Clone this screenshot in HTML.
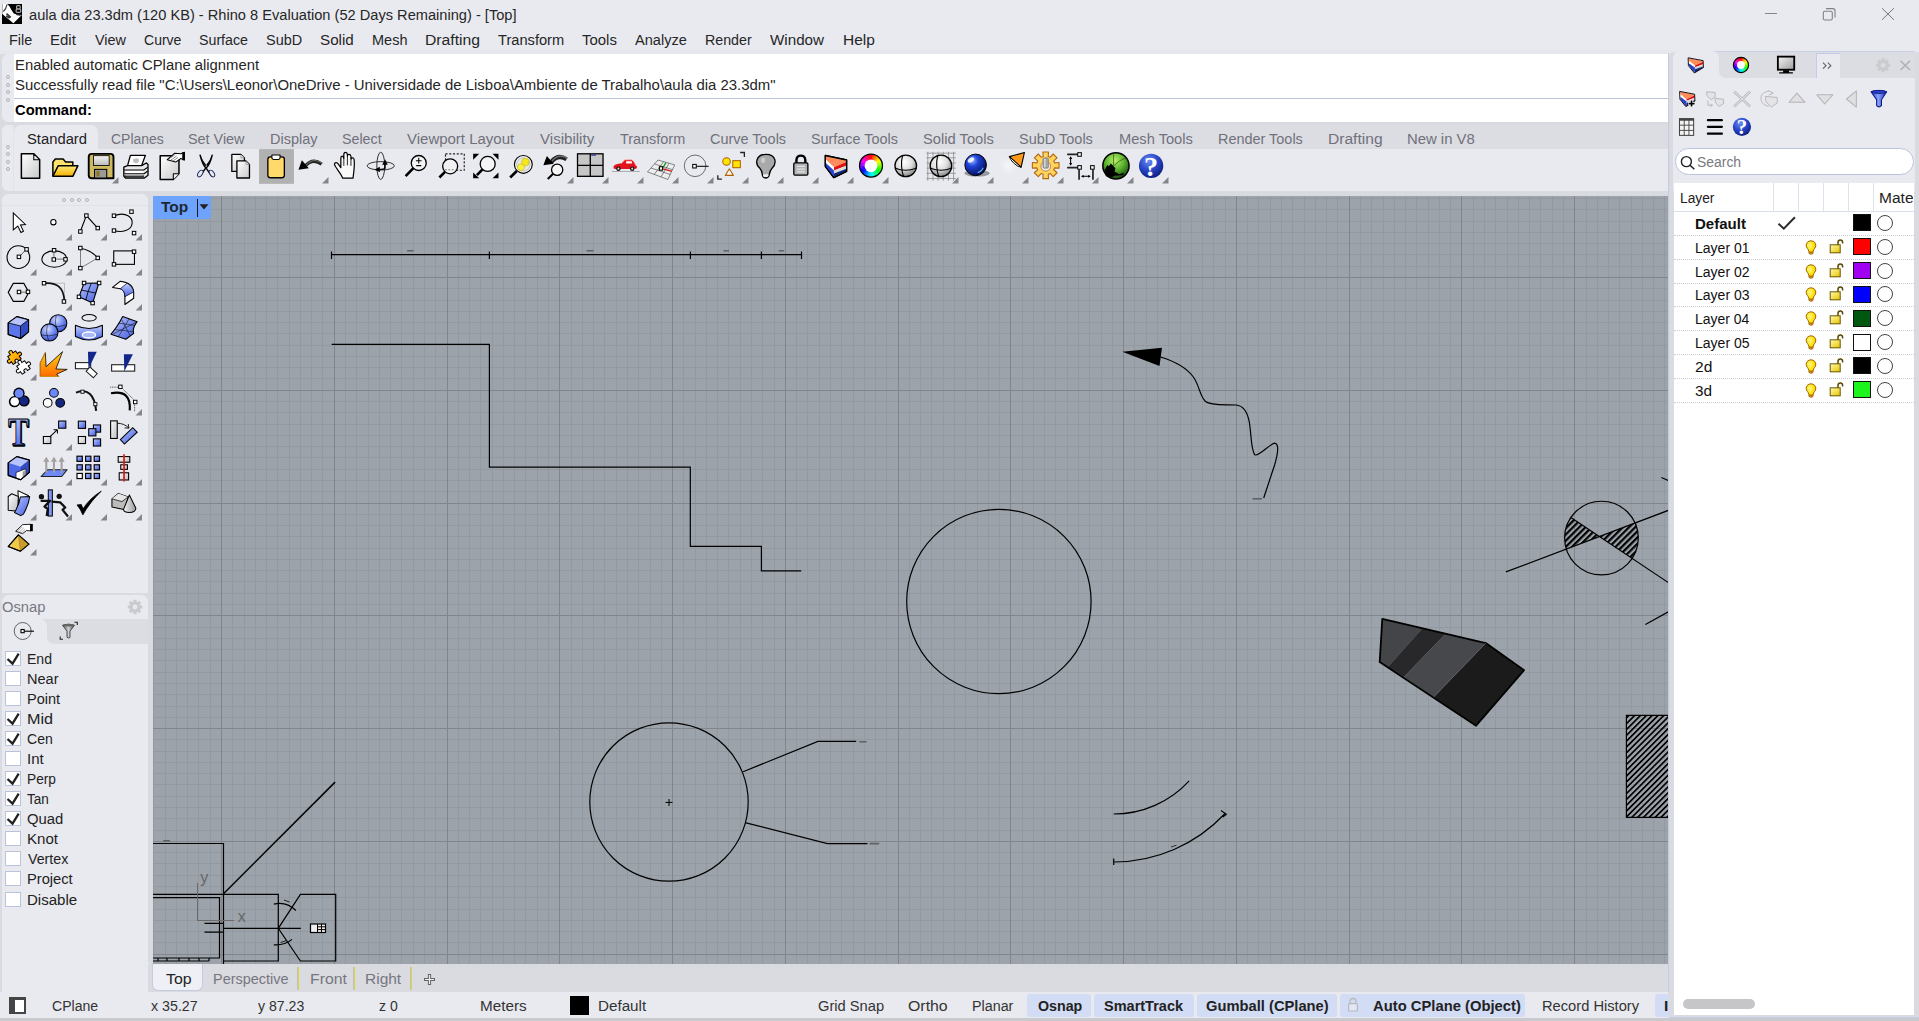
<!DOCTYPE html><html><head><meta charset="utf-8"><title>Rhino</title><style>html,body{margin:0;padding:0}
body{width:1919px;height:1021px;overflow:hidden;background:#e9eaf0;position:relative;font-family:"Liberation Sans",sans-serif}
.b{position:absolute;display:block}
.t{position:absolute;white-space:pre;display:block;transform-origin:0 0}
</style></head><body>
<div class="b" style="left:0px;top:50px;width:1672px;height:4px;background:#e6e7ed;"></div>
<div class="b" style="left:0px;top:54px;width:1672px;height:942px;background:#dadbe1;"></div>
<div class="b" style="left:2px;top:54px;width:1666px;height:68px;background:#e9eaf0;border-radius:6px 0 0 6px;"></div>
<div class="b" style="left:14px;top:54px;width:1654px;height:44px;background:#fff;"></div>
<div class="b" style="left:14px;top:98px;width:1654px;height:1px;background:#b9c3de;"></div>
<div class="b" style="left:14px;top:99px;width:1654px;height:23px;background:#fff;"></div>
<div class="b" style="left:5.5px;top:75px;width:2px;height:2px;border:1px solid #b0b1b7;border-radius:50%"></div>
<div class="b" style="left:5.5px;top:82.5px;width:2px;height:2px;border:1px solid #b0b1b7;border-radius:50%"></div>
<div class="b" style="left:5.5px;top:90px;width:2px;height:2px;border:1px solid #b0b1b7;border-radius:50%"></div>
<div class="b" style="left:5.5px;top:97.5px;width:2px;height:2px;border:1px solid #b0b1b7;border-radius:50%"></div>
<div class="b" style="left:2px;top:125px;width:1666px;height:66px;background:#e9eaf0;border-radius:6px 0 0 6px;"></div>
<div class="b" style="left:14px;top:125px;width:1654px;height:24px;background:#dcdde3;"></div>
<div class="b" style="left:13px;top:125px;width:1px;height:66px;background:#e2e3e9;"></div>
<div class="b" style="left:14px;top:125px;width:84px;height:25px;background:#e9eaf0;border-radius:7px 7px 0 0;"></div>
<div class="b" style="left:5.5px;top:144.7px;width:2px;height:2px;border:1px solid #b0b1b7;border-radius:50%"></div>
<div class="b" style="left:5.5px;top:152.2px;width:2px;height:2px;border:1px solid #b0b1b7;border-radius:50%"></div>
<div class="b" style="left:5.5px;top:159.7px;width:2px;height:2px;border:1px solid #b0b1b7;border-radius:50%"></div>
<div class="b" style="left:5.5px;top:167.2px;width:2px;height:2px;border:1px solid #b0b1b7;border-radius:50%"></div>
<div class="b" style="left:2px;top:194px;width:146px;height:399px;background:#e9eaf0;border-radius:6px 6px 0 0;"></div>
<div class="b" style="left:2px;top:205px;width:146px;height:1px;background:#e1e2e8;"></div>
<div class="b" style="left:62px;top:197.6px;width:2px;height:2px;border:1px solid #b0b1b7;border-radius:50%"></div>
<div class="b" style="left:69.5px;top:197.6px;width:2px;height:2px;border:1px solid #b0b1b7;border-radius:50%"></div>
<div class="b" style="left:77px;top:197.6px;width:2px;height:2px;border:1px solid #b0b1b7;border-radius:50%"></div>
<div class="b" style="left:84.5px;top:197.6px;width:2px;height:2px;border:1px solid #b0b1b7;border-radius:50%"></div>
<div class="b" style="left:2px;top:595px;width:146px;height:368px;background:#e9eaf0;border-radius:7px 7px 0 0;"></div>
<div class="b" style="left:2px;top:619px;width:146px;height:25px;background:#dcdde3;border-radius:0 0 0 0;"></div>
<div class="b" style="left:2px;top:619px;width:45px;height:25px;background:#e9eaf0;border-radius:0 7px 0 0;"></div>
<div class="b" style="left:47px;top:637px;width:7px;height:7px;background:#e9eaf0;"></div>
<div class="b" style="left:47px;top:630px;width:14px;height:14px;background:#dcdde3;border-radius:0 0 0 7px;"></div>
<div class="b" style="left:2px;top:963px;width:148px;height:33px;background:#e9eaf0;"></div>
<svg class="b" style="left:153px;top:196px" width="1515" height="768" viewBox="153 196 1515 768">
<rect x="153" y="196" width="1515" height="768" fill="#9da3aa"/>
<path d="M153.5 196V964M165.5 196V964M176.5 196V964M187.5 196V964M198.5 196V964M210.5 196V964M232.5 196V964M244.5 196V964M255.5 196V964M266.5 196V964M277.5 196V964M289.5 196V964M300.5 196V964M311.5 196V964M322.5 196V964M345.5 196V964M356.5 196V964M368.5 196V964M379.5 196V964M390.5 196V964M401.5 196V964M413.5 196V964M424.5 196V964M435.5 196V964M458.5 196V964M469.5 196V964M480.5 196V964M492.5 196V964M503.5 196V964M514.5 196V964M525.5 196V964M537.5 196V964M548.5 196V964M571.5 196V964M582.5 196V964M593.5 196V964M604.5 196V964M616.5 196V964M627.5 196V964M638.5 196V964M650.5 196V964M661.5 196V964M683.5 196V964M695.5 196V964M706.5 196V964M717.5 196V964M728.5 196V964M740.5 196V964M751.5 196V964M762.5 196V964M774.5 196V964M796.5 196V964M807.5 196V964M819.5 196V964M830.5 196V964M841.5 196V964M853.5 196V964M864.5 196V964M875.5 196V964M886.5 196V964M909.5 196V964M920.5 196V964M931.5 196V964M943.5 196V964M954.5 196V964M965.5 196V964M977.5 196V964M988.5 196V964M999.5 196V964M1022.5 196V964M1033.5 196V964M1044.5 196V964M1055.5 196V964M1067.5 196V964M1078.5 196V964M1089.5 196V964M1101.5 196V964M1112.5 196V964M1134.5 196V964M1146.5 196V964M1157.5 196V964M1168.5 196V964M1180.5 196V964M1191.5 196V964M1202.5 196V964M1213.5 196V964M1225.5 196V964M1247.5 196V964M1258.5 196V964M1270.5 196V964M1281.5 196V964M1292.5 196V964M1304.5 196V964M1315.5 196V964M1326.5 196V964M1337.5 196V964M1360.5 196V964M1371.5 196V964M1383.5 196V964M1394.5 196V964M1405.5 196V964M1416.5 196V964M1428.5 196V964M1439.5 196V964M1450.5 196V964M1473.5 196V964M1484.5 196V964M1495.5 196V964M1507.5 196V964M1518.5 196V964M1529.5 196V964M1540.5 196V964M1552.5 196V964M1563.5 196V964M1586.5 196V964M1597.5 196V964M1608.5 196V964M1619.5 196V964M1631.5 196V964M1642.5 196V964M1653.5 196V964M1664.5 196V964M153 198.5H1668M153 209.5H1668M153 221.5H1668M153 232.5H1668M153 243.5H1668M153 254.5H1668M153 266.5H1668M153 288.5H1668M153 300.5H1668M153 311.5H1668M153 322.5H1668M153 333.5H1668M153 345.5H1668M153 356.5H1668M153 367.5H1668M153 378.5H1668M153 401.5H1668M153 412.5H1668M153 424.5H1668M153 435.5H1668M153 446.5H1668M153 457.5H1668M153 469.5H1668M153 480.5H1668M153 491.5H1668M153 514.5H1668M153 525.5H1668M153 536.5H1668M153 548.5H1668M153 559.5H1668M153 570.5H1668M153 581.5H1668M153 593.5H1668M153 604.5H1668M153 627.5H1668M153 638.5H1668M153 649.5H1668M153 660.5H1668M153 672.5H1668M153 683.5H1668M153 694.5H1668M153 706.5H1668M153 717.5H1668M153 739.5H1668M153 751.5H1668M153 762.5H1668M153 773.5H1668M153 784.5H1668M153 796.5H1668M153 807.5H1668M153 818.5H1668M153 830.5H1668M153 852.5H1668M153 863.5H1668M153 875.5H1668M153 886.5H1668M153 897.5H1668M153 909.5H1668M153 920.5H1668M153 931.5H1668M153 942.5H1668" stroke="#9299a0" stroke-width="1" fill="none" shape-rendering="crispEdges"/>
<path d="M221.5 196V964M334.5 196V964M447.5 196V964M559.5 196V964M672.5 196V964M785.5 196V964M898.5 196V964M1010.5 196V964M1123.5 196V964M1236.5 196V964M1349.5 196V964M1461.5 196V964M1574.5 196V964M153 277.5H1668M153 390.5H1668M153 503.5H1668M153 615.5H1668M153 728.5H1668M153 841.5H1668M153 954.5H1668" stroke="#81868c" stroke-width="1" fill="none" shape-rendering="crispEdges"/>
<defs>
<pattern id="h1" width="4.4" height="4.4" patternUnits="userSpaceOnUse" patternTransform="rotate(-45) translate(0 1.2)"><rect x="0" y="0" width="4.4" height="2.2" fill="#000"/></pattern>
<pattern id="h2" width="4.12" height="4.12" patternUnits="userSpaceOnUse" patternTransform="rotate(-45) translate(0 0.6)"><rect x="0" y="0" width="4.12" height="1.7" fill="#000"/></pattern>
<clipPath id="cc"><circle cx="1601.45" cy="538.1" r="36.85"/></clipPath>
</defs>
<path d="M331.5 254.7H801.5M331.5 251.5V259M489.4 251.5V259M690.4 251.5V259M761.4 251.5V259M801.5 251.5V259" stroke="#000" stroke-width="1.2" fill="none"/>
<path d="M407 250.8H413.5M586.5 250.8H593.5M723.5 250.8H729M778.8 250.8H783.8" stroke="#5f6368" stroke-width="1.6" fill="none"/>
<path d="M331.6 344.3H489.4V467.1H690.3V546.3H761.4V570.9H801.2" stroke="#000" stroke-width="1.2" fill="none"/>
<path d="M1122.3 351.8L1162 347.7L1159.5 365.9Z" fill="#000"/>
<path d="M1160.5 357C1172 360.5 1185 366 1193 376.5C1199.5 385 1199.5 396 1205.5 401.5C1211 406 1226 404.3 1236 405C1244 405.6 1247.6 413 1249.3 422C1251.3 433 1250.8 450 1254.8 454.8C1258.8 457 1269 444.5 1274.5 443.2C1279.8 443.5 1277.5 455 1274.6 465L1263.7 498" stroke="#000" stroke-width="1.2" fill="none"/>
<path d="M1252.5 498.8H1262" stroke="#5f6368" stroke-width="1.6" fill="none"/>
<circle cx="998.9" cy="601.5" r="92.2" stroke="#000" stroke-width="1.2" fill="none"/>
<circle cx="669" cy="802" r="79.2" stroke="#000" stroke-width="1.2" fill="none"/>
<path d="M665.5 802.4H672.5M669 799V806" stroke="#000" stroke-width="1" fill="none"/>
<path d="M743.1 771.7L817.9 741.4H856.2M746 822.8L827.4 843.6H867.5" stroke="#000" stroke-width="1.2" fill="none"/>
<path d="M859.2 741.8H866.6M869.5 843.6H879.2" stroke="#5f6368" stroke-width="1.6" fill="none"/>
<path d="M1113.7 814A102.4 102.4 0 0 0 1189.2 780.8" stroke="#000" stroke-width="1.2" fill="none"/>
<path d="M1113.7 862A152.6 152.6 0 0 0 1224.6 814M1113.7 858.5V865M1221 810.5L1226.3 814.2L1222.8 817" stroke="#000" stroke-width="1.2" fill="none"/>
<path d="M1171 847L1176.5 845.2" stroke="#333" stroke-width="1" fill="none"/>
<g clip-path="url(#cc)"><path d="M1599.3 536.5L1555 506.8V553.3Z" fill="url(#h1)"/><path d="M1599.3 536.5L1645 519.2V567Z" fill="url(#h1)"/></g>
<circle cx="1601.45" cy="538.1" r="36.85" stroke="#000" stroke-width="1.2" fill="none"/>
<path d="M1505.9 571.9L1668.5 510.3M1571.3 517.7L1668.5 582.7M1661.4 477.5L1668.5 480.6M1645.4 624.6L1668.5 611.7" stroke="#000" stroke-width="1.2" fill="none"/>
<polygon points="1382.3,618.9 1422.5,628.2 1387.9,666.9 1379.7,662.0" fill="#444548"/>
<polygon points="1422.5,628.2 1445.6,633.8 1403.9,676.9 1387.9,666.9" fill="#28282a"/>
<polygon points="1445.6,633.8 1485.8,643.1 1433.7,697.0 1403.9,676.9" fill="#47484b"/>
<polygon points="1485.8,643.1 1524.1,670.2 1476.1,725.7 1433.7,697.0" fill="#1b1b1c"/>
<polygon points="1382.3,618.9 1485.8,643.1 1524.1,670.2 1476.1,725.7 1379.7,662.0" stroke="#000" stroke-width="1.8" stroke-linejoin="round" fill="none"/>
<path d="M1485.8 643.1L1433.7 697.0" stroke="#66676a" stroke-width="0.8"/>
<rect x="1626.4" y="715.3" width="45" height="102" fill="url(#h2)"/>
<path d="M1670 715.3H1626.4V817.3H1670" stroke="#000" stroke-width="1.2" fill="none"/>
<path d="M223.5 893.8L335.1 782.1" stroke="#000" stroke-width="1.5" fill="none"/>
<path d="M150 843.5H223.5V965M150 894.4H278.3V961H223.5M150 897.7H219.5V958H150M150 961H209M223.5 928.3H300.8M204.5 923.4H223.5M204.5 932.2H223.5" stroke="#000" stroke-width="1.2" fill="none"/>
<path d="M158 958V961M167 958V961M179 958V961M189 958V961M199 958V961M209 958V961" stroke="#000" stroke-width="1.2" fill="none"/>
<path d="M300.4 894.4H335.7V961H300.4L278.3 928.3Z" stroke="#000" stroke-width="1.2" fill="none"/>
<path d="M273.8 904.2Q286 901 295.9 910.5M273.8 944.9Q285 945.5 292 939.4" stroke="#000" stroke-width="1.2" fill="none"/>
<path d="M284 900L289.5 902M280.5 942.5L286.5 940.5" stroke="#222" stroke-width="1" fill="none"/>
<path d="M163.3 840.8H170" stroke="#5f6368" stroke-width="1.6" fill="none"/>
<rect x="310.5" y="924" width="15" height="8.5" fill="#f0f0f0" stroke="#000" stroke-width="1.2"/><path d="M317.5 924V932.5M321.5 924V932.5M317.5 926.8H325.5M317.5 929.6H325.5" stroke="#000" stroke-width="1" fill="none"/>
<path d="M197.5 883.2V920.5H233.8" stroke="#6a6a6a" stroke-width="1" fill="none" shape-rendering="crispEdges"/>
<text x="200.3" y="882.8" font-family="Liberation Sans, sans-serif" font-size="16" fill="#666">y</text>
<text x="237.8" y="921.5" font-family="Liberation Sans, sans-serif" font-size="16" fill="#666">x</text>
<path d="M153 196H211V215.5Q211 219 207.5 219H153Z" fill="#6ea3fc"/>
<path d="M197.5 199V217" stroke="#1a1a1a" stroke-width="1" shape-rendering="crispEdges"/>
<path d="M199.5 204.3H208.5L204 209.5Z" fill="#222"/>
</svg>
<div class="b" style="left:1668px;top:53px;width:1px;height:939px;background:#c2cae4;"></div>
<div class="b" style="left:148px;top:964px;width:1520px;height:28px;background:#dadbe1;"></div>
<div class="b" style="left:151.5px;top:964px;width:51px;height:27px;background:#eff0f5;border-radius:0 0 6px 6px;border:1px solid #c5cbe0;border-top:none;box-sizing:border-box;"></div>
<div class="b" style="left:298px;top:967px;width:1px;height:23px;background:#dcd440;"></div>
<div class="b" style="left:297px;top:967px;width:1px;height:23px;background:#8a8450;opacity:.3"></div>
<div class="b" style="left:354px;top:967px;width:1px;height:23px;background:#dcd440;"></div>
<div class="b" style="left:353px;top:967px;width:1px;height:23px;background:#8a8450;opacity:.3"></div>
<div class="b" style="left:411px;top:967px;width:1px;height:23px;background:#dcd440;"></div>
<div class="b" style="left:410px;top:967px;width:1px;height:23px;background:#8a8450;opacity:.3"></div>
<div class="b" style="left:0px;top:992px;width:1668px;height:26px;background:#e9eaf0;"></div>
<div class="b" style="left:9px;top:997px;width:17px;height:17px;background:#454545;"></div>
<div class="b" style="left:15px;top:999.5px;width:9px;height:12px;background:#fff;"></div>
<div class="b" style="left:1027px;top:994px;width:64px;height:23px;background:#d3dcf5;border-radius:3px;"></div>
<div class="b" style="left:1094px;top:994px;width:100px;height:23px;background:#d3dcf5;border-radius:3px;"></div>
<div class="b" style="left:1197px;top:994px;width:140px;height:23px;background:#d3dcf5;border-radius:3px;"></div>
<div class="b" style="left:1340px;top:994px;width:185px;height:23px;background:#d3dcf5;border-radius:3px;"></div>
<div class="b" style="left:1655px;top:994px;width:17px;height:23px;background:#d3dcf5;border-radius:3px;"></div>
<div class="b" style="left:570px;top:996px;width:19px;height:19px;background:#000;"></div>
<div class="b" style="left:1669px;top:52px;width:250px;height:969px;background:#dadbe1;border-radius:5px 0 0 0;"></div>
<div class="b" style="left:1673px;top:51px;width:242px;height:140px;background:#e9eaf0;border-radius:7px 0 0 0;"></div>
<div class="b" style="left:1673px;top:51px;width:242px;height:27px;background:#dcdde3;border-radius:7px 0 0 0;border-top:1px solid #c9d0e6;box-sizing:border-box;"></div>
<div class="b" style="left:1673px;top:51px;width:46px;height:27px;background:#e9eaf0;border-radius:7px 7px 0 0;"></div>
<div class="b" style="left:1719px;top:71px;width:7px;height:7px;background:#e9eaf0;"></div>
<div class="b" style="left:1719px;top:64px;width:14px;height:14px;background:#dcdde3;border-radius:0 0 0 7px;"></div>
<div class="b" style="left:1816px;top:53px;width:24px;height:25px;background:#e9eaf0;border-top:1px solid #c3cbe6;border-left:1px solid #c3cbe6;box-sizing:border-box;"></div>
<div class="b" style="left:1674px;top:182.5px;width:240px;height:832.5px;background:#fff;"></div>
<div class="b" style="left:1675px;top:148px;width:238.5px;height:26.5px;background:#fff;border:1px solid #bac3dd;border-radius:13.5px;box-sizing:border-box;"></div>
<svg class="b" style="left:1679px;top:154px;" width="18" height="18" viewBox="0 0 18 18"><circle cx="7.4" cy="7.6" r="5" fill="none" stroke="#222" stroke-width="1.4"/><path d="M11 11.2L15.4 15.2" stroke="#222" stroke-width="1.5"/></svg>
<div class="b" style="left:1674px;top:211px;width:240px;height:1px;background:#d9deec;"></div>
<div class="b" style="left:1773px;top:182.5px;width:1px;height:28.5px;background:#dfe3ef;"></div>
<div class="b" style="left:1798px;top:182.5px;width:1px;height:28.5px;background:#dfe3ef;"></div>
<div class="b" style="left:1823px;top:182.5px;width:1px;height:28.5px;background:#dfe3ef;"></div>
<div class="b" style="left:1848px;top:182.5px;width:1px;height:28.5px;background:#dfe3ef;"></div>
<div class="b" style="left:1873px;top:182.5px;width:1px;height:28.5px;background:#dfe3ef;"></div>
<div class="b" style="left:1674px;top:235px;width:240px;height:0px;border-top:1px dotted #c9ccd8;"></div>
<div class="b" style="left:1853px;top:214px;width:18px;height:17px;background:#000;border:1px solid #111;box-sizing:border-box;"></div>
<div class="b" style="left:1876.5px;top:215.0px;width:16px;height:16px;border:1.2px solid #444;border-radius:50%;box-sizing:border-box;background:#fff"></div>
<svg class="b" style="left:1776px;top:214px;" width="22" height="18" viewBox="0 0 22 18"><path d="M2.5 9.7L7.8 14.7L18.9 3.2" stroke="#2a2a2a" stroke-width="2" fill="none"/></svg>
<div class="b" style="left:1674px;top:259px;width:240px;height:0px;border-top:1px dotted #c9ccd8;"></div>
<div class="b" style="left:1853px;top:238px;width:18px;height:17px;background:#f00;border:1px solid #111;box-sizing:border-box;"></div>
<div class="b" style="left:1876.5px;top:238.8px;width:16px;height:16px;border:1.2px solid #444;border-radius:50%;box-sizing:border-box;background:#fff"></div>
<svg class="b" style="left:1805px;top:239.6px;" width="12" height="16" viewBox="0 0 12 16"><defs><radialGradient id="gb" cx="0.4" cy="0.35" r="0.7"><stop offset="0" stop-color="#fff68a"/><stop offset="0.6" stop-color="#ffe000"/><stop offset="1" stop-color="#e0a800"/></radialGradient><linearGradient id="gl" x1="0" y1="0" x2="1" y2="1"><stop offset="0" stop-color="#fffbb0"/><stop offset="1" stop-color="#e8c400"/></linearGradient></defs><path d="M6 0.8C9.2 0.8 10.8 3.2 10.8 5.4C10.8 8 8.6 9 8.2 11.2L7.9 13.6Q6 14.8 4.1 13.6L3.8 11.2C3.4 9 1.2 8 1.2 5.4C1.2 3.2 2.8 0.8 6 0.8Z" fill="url(#gb)" stroke="#8a5a00" stroke-width="0.9"/><path d="M4.2 12.2H7.8" stroke="#c05a00" stroke-width="1.2"/></svg>
<svg class="b" style="left:1829px;top:238.4px;" width="16" height="17" viewBox="0 0 16 17"><path d="M9 7V4.2C9 1.2 13.6 1.2 13.6 4.2V5.5" fill="none" stroke="#5a4a00" stroke-width="1.5"/><rect x="1.2" y="6.8" width="10" height="8" fill="url(#gl)" stroke="#6a5600" stroke-width="1"/></svg>
<div class="b" style="left:1674px;top:283px;width:240px;height:0px;border-top:1px dotted #c9ccd8;"></div>
<div class="b" style="left:1853px;top:262px;width:18px;height:17px;background:#a100f2;border:1px solid #111;box-sizing:border-box;"></div>
<div class="b" style="left:1876.5px;top:262.6px;width:16px;height:16px;border:1.2px solid #444;border-radius:50%;box-sizing:border-box;background:#fff"></div>
<svg class="b" style="left:1805px;top:263.6px;" width="12" height="16" viewBox="0 0 12 16"><defs><radialGradient id="gb" cx="0.4" cy="0.35" r="0.7"><stop offset="0" stop-color="#fff68a"/><stop offset="0.6" stop-color="#ffe000"/><stop offset="1" stop-color="#e0a800"/></radialGradient><linearGradient id="gl" x1="0" y1="0" x2="1" y2="1"><stop offset="0" stop-color="#fffbb0"/><stop offset="1" stop-color="#e8c400"/></linearGradient></defs><path d="M6 0.8C9.2 0.8 10.8 3.2 10.8 5.4C10.8 8 8.6 9 8.2 11.2L7.9 13.6Q6 14.8 4.1 13.6L3.8 11.2C3.4 9 1.2 8 1.2 5.4C1.2 3.2 2.8 0.8 6 0.8Z" fill="url(#gb)" stroke="#8a5a00" stroke-width="0.9"/><path d="M4.2 12.2H7.8" stroke="#c05a00" stroke-width="1.2"/></svg>
<svg class="b" style="left:1829px;top:262.4px;" width="16" height="17" viewBox="0 0 16 17"><path d="M9 7V4.2C9 1.2 13.6 1.2 13.6 4.2V5.5" fill="none" stroke="#5a4a00" stroke-width="1.5"/><rect x="1.2" y="6.8" width="10" height="8" fill="url(#gl)" stroke="#6a5600" stroke-width="1"/></svg>
<div class="b" style="left:1674px;top:306px;width:240px;height:0px;border-top:1px dotted #c9ccd8;"></div>
<div class="b" style="left:1853px;top:286px;width:18px;height:17px;background:#00f;border:1px solid #111;box-sizing:border-box;"></div>
<div class="b" style="left:1876.5px;top:286.4px;width:16px;height:16px;border:1.2px solid #444;border-radius:50%;box-sizing:border-box;background:#fff"></div>
<svg class="b" style="left:1805px;top:286.6px;" width="12" height="16" viewBox="0 0 12 16"><defs><radialGradient id="gb" cx="0.4" cy="0.35" r="0.7"><stop offset="0" stop-color="#fff68a"/><stop offset="0.6" stop-color="#ffe000"/><stop offset="1" stop-color="#e0a800"/></radialGradient><linearGradient id="gl" x1="0" y1="0" x2="1" y2="1"><stop offset="0" stop-color="#fffbb0"/><stop offset="1" stop-color="#e8c400"/></linearGradient></defs><path d="M6 0.8C9.2 0.8 10.8 3.2 10.8 5.4C10.8 8 8.6 9 8.2 11.2L7.9 13.6Q6 14.8 4.1 13.6L3.8 11.2C3.4 9 1.2 8 1.2 5.4C1.2 3.2 2.8 0.8 6 0.8Z" fill="url(#gb)" stroke="#8a5a00" stroke-width="0.9"/><path d="M4.2 12.2H7.8" stroke="#c05a00" stroke-width="1.2"/></svg>
<svg class="b" style="left:1829px;top:285.4px;" width="16" height="17" viewBox="0 0 16 17"><path d="M9 7V4.2C9 1.2 13.6 1.2 13.6 4.2V5.5" fill="none" stroke="#5a4a00" stroke-width="1.5"/><rect x="1.2" y="6.8" width="10" height="8" fill="url(#gl)" stroke="#6a5600" stroke-width="1"/></svg>
<div class="b" style="left:1674px;top:330px;width:240px;height:0px;border-top:1px dotted #c9ccd8;"></div>
<div class="b" style="left:1853px;top:310px;width:18px;height:17px;background:#00570f;border:1px solid #111;box-sizing:border-box;"></div>
<div class="b" style="left:1876.5px;top:310.2px;width:16px;height:16px;border:1.2px solid #444;border-radius:50%;box-sizing:border-box;background:#fff"></div>
<svg class="b" style="left:1805px;top:310.6px;" width="12" height="16" viewBox="0 0 12 16"><defs><radialGradient id="gb" cx="0.4" cy="0.35" r="0.7"><stop offset="0" stop-color="#fff68a"/><stop offset="0.6" stop-color="#ffe000"/><stop offset="1" stop-color="#e0a800"/></radialGradient><linearGradient id="gl" x1="0" y1="0" x2="1" y2="1"><stop offset="0" stop-color="#fffbb0"/><stop offset="1" stop-color="#e8c400"/></linearGradient></defs><path d="M6 0.8C9.2 0.8 10.8 3.2 10.8 5.4C10.8 8 8.6 9 8.2 11.2L7.9 13.6Q6 14.8 4.1 13.6L3.8 11.2C3.4 9 1.2 8 1.2 5.4C1.2 3.2 2.8 0.8 6 0.8Z" fill="url(#gb)" stroke="#8a5a00" stroke-width="0.9"/><path d="M4.2 12.2H7.8" stroke="#c05a00" stroke-width="1.2"/></svg>
<svg class="b" style="left:1829px;top:309.4px;" width="16" height="17" viewBox="0 0 16 17"><path d="M9 7V4.2C9 1.2 13.6 1.2 13.6 4.2V5.5" fill="none" stroke="#5a4a00" stroke-width="1.5"/><rect x="1.2" y="6.8" width="10" height="8" fill="url(#gl)" stroke="#6a5600" stroke-width="1"/></svg>
<div class="b" style="left:1674px;top:354px;width:240px;height:0px;border-top:1px dotted #c9ccd8;"></div>
<div class="b" style="left:1853px;top:334px;width:18px;height:17px;background:#fff;border:1px solid #111;box-sizing:border-box;"></div>
<div class="b" style="left:1876.5px;top:334.0px;width:16px;height:16px;border:1.2px solid #444;border-radius:50%;box-sizing:border-box;background:#fff"></div>
<svg class="b" style="left:1805px;top:334.6px;" width="12" height="16" viewBox="0 0 12 16"><defs><radialGradient id="gb" cx="0.4" cy="0.35" r="0.7"><stop offset="0" stop-color="#fff68a"/><stop offset="0.6" stop-color="#ffe000"/><stop offset="1" stop-color="#e0a800"/></radialGradient><linearGradient id="gl" x1="0" y1="0" x2="1" y2="1"><stop offset="0" stop-color="#fffbb0"/><stop offset="1" stop-color="#e8c400"/></linearGradient></defs><path d="M6 0.8C9.2 0.8 10.8 3.2 10.8 5.4C10.8 8 8.6 9 8.2 11.2L7.9 13.6Q6 14.8 4.1 13.6L3.8 11.2C3.4 9 1.2 8 1.2 5.4C1.2 3.2 2.8 0.8 6 0.8Z" fill="url(#gb)" stroke="#8a5a00" stroke-width="0.9"/><path d="M4.2 12.2H7.8" stroke="#c05a00" stroke-width="1.2"/></svg>
<svg class="b" style="left:1829px;top:333.4px;" width="16" height="17" viewBox="0 0 16 17"><path d="M9 7V4.2C9 1.2 13.6 1.2 13.6 4.2V5.5" fill="none" stroke="#5a4a00" stroke-width="1.5"/><rect x="1.2" y="6.8" width="10" height="8" fill="url(#gl)" stroke="#6a5600" stroke-width="1"/></svg>
<div class="b" style="left:1674px;top:378px;width:240px;height:0px;border-top:1px dotted #c9ccd8;"></div>
<div class="b" style="left:1853px;top:357px;width:18px;height:17px;background:#000;border:1px solid #111;box-sizing:border-box;"></div>
<div class="b" style="left:1876.5px;top:357.8px;width:16px;height:16px;border:1.2px solid #444;border-radius:50%;box-sizing:border-box;background:#fff"></div>
<svg class="b" style="left:1805px;top:358.6px;" width="12" height="16" viewBox="0 0 12 16"><defs><radialGradient id="gb" cx="0.4" cy="0.35" r="0.7"><stop offset="0" stop-color="#fff68a"/><stop offset="0.6" stop-color="#ffe000"/><stop offset="1" stop-color="#e0a800"/></radialGradient><linearGradient id="gl" x1="0" y1="0" x2="1" y2="1"><stop offset="0" stop-color="#fffbb0"/><stop offset="1" stop-color="#e8c400"/></linearGradient></defs><path d="M6 0.8C9.2 0.8 10.8 3.2 10.8 5.4C10.8 8 8.6 9 8.2 11.2L7.9 13.6Q6 14.8 4.1 13.6L3.8 11.2C3.4 9 1.2 8 1.2 5.4C1.2 3.2 2.8 0.8 6 0.8Z" fill="url(#gb)" stroke="#8a5a00" stroke-width="0.9"/><path d="M4.2 12.2H7.8" stroke="#c05a00" stroke-width="1.2"/></svg>
<svg class="b" style="left:1829px;top:357.4px;" width="16" height="17" viewBox="0 0 16 17"><path d="M9 7V4.2C9 1.2 13.6 1.2 13.6 4.2V5.5" fill="none" stroke="#5a4a00" stroke-width="1.5"/><rect x="1.2" y="6.8" width="10" height="8" fill="url(#gl)" stroke="#6a5600" stroke-width="1"/></svg>
<div class="b" style="left:1674px;top:402px;width:240px;height:0px;border-top:1px dotted #c9ccd8;"></div>
<div class="b" style="left:1853px;top:381px;width:18px;height:17px;background:#1cf41c;border:1px solid #111;box-sizing:border-box;"></div>
<div class="b" style="left:1876.5px;top:381.6px;width:16px;height:16px;border:1.2px solid #444;border-radius:50%;box-sizing:border-box;background:#fff"></div>
<svg class="b" style="left:1805px;top:382.6px;" width="12" height="16" viewBox="0 0 12 16"><defs><radialGradient id="gb" cx="0.4" cy="0.35" r="0.7"><stop offset="0" stop-color="#fff68a"/><stop offset="0.6" stop-color="#ffe000"/><stop offset="1" stop-color="#e0a800"/></radialGradient><linearGradient id="gl" x1="0" y1="0" x2="1" y2="1"><stop offset="0" stop-color="#fffbb0"/><stop offset="1" stop-color="#e8c400"/></linearGradient></defs><path d="M6 0.8C9.2 0.8 10.8 3.2 10.8 5.4C10.8 8 8.6 9 8.2 11.2L7.9 13.6Q6 14.8 4.1 13.6L3.8 11.2C3.4 9 1.2 8 1.2 5.4C1.2 3.2 2.8 0.8 6 0.8Z" fill="url(#gb)" stroke="#8a5a00" stroke-width="0.9"/><path d="M4.2 12.2H7.8" stroke="#c05a00" stroke-width="1.2"/></svg>
<svg class="b" style="left:1829px;top:381.4px;" width="16" height="17" viewBox="0 0 16 17"><path d="M9 7V4.2C9 1.2 13.6 1.2 13.6 4.2V5.5" fill="none" stroke="#5a4a00" stroke-width="1.5"/><rect x="1.2" y="6.8" width="10" height="8" fill="url(#gl)" stroke="#6a5600" stroke-width="1"/></svg>
<div class="b" style="left:1683px;top:999px;width:72px;height:10px;background:#c6c6c8;border-radius:5px;"></div>
<div class="b" style="left:0px;top:1018px;width:1919px;height:3px;background:#c9cace;"></div>
<div class="b" style="left:1669px;top:1017px;width:250px;height:1px;background:#c5cde6;"></div>
<svg class="b" style="left:0;top:148px" width="1672" height="44" viewBox="0 148 1672 44"><defs>
<linearGradient id="gPaper" x1="0" y1="0" x2="1" y2="1"><stop offset="0" stop-color="#ffffff"/><stop offset="1" stop-color="#c9c9c9"/></linearGradient>
<linearGradient id="gFold" x1="0" y1="0" x2="0" y2="1"><stop offset="0" stop-color="#ffe877"/><stop offset="1" stop-color="#f3b200"/></linearGradient>
<linearGradient id="gMetal" x1="0" y1="0" x2="0" y2="1"><stop offset="0" stop-color="#f4f4f4"/><stop offset="1" stop-color="#b9b9b9"/></linearGradient>
<radialGradient id="gBlueBall" cx="0.35" cy="0.3" r="0.75"><stop offset="0" stop-color="#9db8ff"/><stop offset="0.35" stop-color="#1f45d8"/><stop offset="1" stop-color="#020b52"/></radialGradient>
<radialGradient id="gWhiteBall" cx="0.42" cy="0.32" r="0.75"><stop offset="0" stop-color="#ffffff"/><stop offset="0.5" stop-color="#dedede"/><stop offset="1" stop-color="#6f6f6f"/></radialGradient><radialGradient id="gGlow" cx="0.5" cy="0.5" r="0.5"><stop offset="0" stop-color="#fff" stop-opacity="0.55"/><stop offset="1" stop-color="#fff" stop-opacity="0"/></radialGradient>
<radialGradient id="gGreenBall" cx="0.45" cy="0.3" r="0.75"><stop offset="0" stop-color="#b9f06a"/><stop offset="0.5" stop-color="#58b02c"/><stop offset="1" stop-color="#0c3a08"/></radialGradient>
<radialGradient id="gHelp" cx="0.4" cy="0.3" r="0.75"><stop offset="0" stop-color="#6f8df2"/><stop offset="0.5" stop-color="#2a48c8"/><stop offset="1" stop-color="#0a1a7a"/></radialGradient>
<radialGradient id="gBulb" cx="0.4" cy="0.35" r="0.7"><stop offset="0" stop-color="#ffffff"/><stop offset="0.7" stop-color="#d5d5d5"/><stop offset="1" stop-color="#8a8a8a"/></radialGradient>
</defs><g transform="translate(12,148) scale(0.09380)">
<path d="M100 62H232L295 125V322H100Z" fill="url(#gPaper)" stroke="#000" stroke-width="16" stroke-linejoin="round"/>
<path d="M232 62V125H295Z" fill="#e8e8e8" stroke="#000" stroke-width="11" stroke-linejoin="round"/>
<path d="M436 300V150L462 118H545L572 148H648V188" fill="#ffe36a" stroke="#000" stroke-width="16" stroke-linejoin="round"/>
<path d="M436 300L492 190H702L650 300Z" fill="url(#gFold)" stroke="#000" stroke-width="16" stroke-linejoin="round"/>
<path d="M850 62H1050Q1082 62 1082 95V322H1050L1030 322H850Q818 322 818 290V95Q818 62 850 62Z" fill="#cdb95f" stroke="#000" stroke-width="20" stroke-linejoin="round"/>
<rect x="868" y="82" width="168" height="105" fill="url(#gMetal)" stroke="#000" stroke-width="9"/>
<rect x="880" y="228" width="130" height="92" fill="#9a9a9a" stroke="#000" stroke-width="11"/>
<rect x="900" y="245" width="34" height="58" fill="#8a7426"/>
<path d="M1232 188L1262 78H1422L1382 188Z" fill="#fff" stroke="#000" stroke-width="14" stroke-linejoin="round"/>
<path d="M1292 120L1325 108L1352 118V150L1322 162L1292 150Z" fill="#bdbdbd"/>
<path d="M1192 205L1232 188H1382L1432 160L1450 175V290L1412 320H1210L1192 300Z" fill="#e9e9e9" stroke="#000" stroke-width="14" stroke-linejoin="round"/>
<path d="M1195 235H1405L1448 205M1198 275H1408L1448 245M1200 300H1408" stroke="#000" stroke-width="12" fill="none"/>
<rect x="1215" y="245" width="180" height="22" fill="#fff"/><rect x="1215" y="283" width="180" height="12" fill="#a8a8a8"/>
<path d="M1580 82H1780V275L1720 335H1580Z" fill="url(#gPaper)" stroke="#000" stroke-width="16" stroke-linejoin="round"/>
<path d="M1780 275H1720V335" fill="#eee" stroke="#000" stroke-width="11" stroke-linejoin="round"/>
<path d="M1655 125L1735 55L1800 62L1838 45V128L1800 112L1745 150Z" fill="#fff" stroke="#000" stroke-width="11" stroke-linejoin="round"/>
<rect x="1815" y="45" width="28" height="85" fill="#000"/>
<path d="M1668 120L1740 70M1690 132L1755 85M1712 142L1770 100" stroke="#555" stroke-width="7"/>
</g>
<path d="M118.5 183.5H112.0L118.5 177.0Z" fill="#85868c"/>
<g transform="translate(187,148) scale(0.09380)">
<rect x="768" y="12" width="372" height="370" fill="#b1b1b1"/>
<path d="M140 78Q170 190 205 215L262 300M268 78Q240 190 200 215L138 300" stroke="#000" stroke-width="16" fill="none" stroke-linecap="round"/>
<path d="M140 78Q165 160 205 210L215 195Q175 150 140 78ZM268 78Q245 160 205 210L195 195Q235 150 268 78Z" fill="#000"/>
<ellipse cx="142" cy="272" rx="22" ry="40" transform="rotate(35 142 272)" fill="#e9eaf0" stroke="#15225e" stroke-width="10"/>
<ellipse cx="266" cy="272" rx="22" ry="40" transform="rotate(-35 266 272)" fill="#e9eaf0" stroke="#15225e" stroke-width="10"/>
<path d="M478 68H575L612 105V250H478Z" fill="url(#gPaper)" stroke="#000" stroke-width="14" stroke-linejoin="round"/>
<path d="M575 68V105H612" fill="#ddd" stroke="#777" stroke-width="6"/>
<path d="M532 138H628L666 175V320H532Z" fill="url(#gPaper)" stroke="#000" stroke-width="14" stroke-linejoin="round"/>
<path d="M628 138V175H666" fill="#ddd" stroke="#777" stroke-width="6"/>
<rect x="862" y="95" width="176" height="222" rx="26" fill="#ffd96a" stroke="#000" stroke-width="14"/>
<path d="M905 75H992V105Q992 122 975 122H922Q905 122 905 105Z" fill="#fff" stroke="#000" stroke-width="12" stroke-linejoin="round"/>
<path d="M1258 195Q1340 100 1435 172" stroke="#222" stroke-width="34" fill="none"/>
<path d="M1258 195Q1340 100 1435 172" stroke="#6b6b6b" stroke-width="11" fill="none" transform="translate(8,-8)"/>
<path d="M1188 232L1225 130L1298 215Z" fill="#000"/>
<path d="M1660 322C1640 270 1585 215 1572 175C1575 150 1600 150 1615 175L1640 210V110C1640 80 1668 80 1672 110V70C1672 40 1708 40 1710 70V85C1712 60 1745 60 1748 90V120C1750 100 1780 100 1782 125C1790 200 1775 270 1770 322Z" fill="#fafafa" stroke="#000" stroke-width="13" stroke-linejoin="round"/>
<path d="M1672 110V190M1710 85V185M1748 120V190" stroke="#000" stroke-width="9"/>
</g>
<path d="M328.5 183.5H322.0L328.5 177.0Z" fill="#85868c"/>
<g transform="translate(362,148) scale(0.09380)">
<ellipse cx="200" cy="190" rx="145" ry="45" fill="none" stroke="#111" stroke-width="9"/>
<ellipse cx="200" cy="190" rx="42" ry="145" fill="none" stroke="#111" stroke-width="9"/>
<path d="M245 120L215 178H275Z" fill="#000"/><path d="M135 228L190 200V258Z" fill="#000"/>
<path d="M245 170V215Q240 228 180 228" stroke="#000" stroke-width="16" fill="none"/>
<circle cx="605" cy="160" r="80" fill="#f4f4f6" stroke="#000" stroke-width="14"/>
<path d="M548 215L465 300" stroke="#000" stroke-width="28"/>
<path d="M605 105V165M575 135H635M578 188H632" stroke="#000" stroke-width="11"/>
<rect x="890" y="62" width="200" height="175" fill="none" stroke="#222" stroke-width="12" stroke-dasharray="22 18"/>
<circle cx="940" cy="195" r="80" fill="#f1f1f3" stroke="#000" stroke-width="14"/>
<path d="M885 232H995" stroke="#555" stroke-width="8" stroke-dasharray="20 16"/>
<path d="M885 255L825 315" stroke="#000" stroke-width="28"/>
<path d="M1185 62H1250L1185 125ZM1455 62V125L1392 62ZM1185 322V262L1250 322ZM1455 322H1392L1455 262Z" fill="#000"/>
<circle cx="1340" cy="170" r="80" fill="#f4f4f6" stroke="#000" stroke-width="14"/>
<path d="M1285 228L1225 290" stroke="#000" stroke-width="28"/>
<circle cx="1720" cy="175" r="95" fill="#f6f6f6" stroke="#000" stroke-width="12"/>
<circle cx="1720" cy="175" r="72" fill="#e6e6e6" stroke="#999" stroke-width="6"/>
<circle cx="1742" cy="150" r="40" fill="#f4e81c" stroke="#b8a800" stroke-width="5"/>
<circle cx="1695" cy="205" r="36" fill="#fbf23a" stroke="#b8a800" stroke-width="5"/>
<path d="M1650 245L1580 315" stroke="#000" stroke-width="28"/>
</g>
<g transform="translate(537,148) scale(0.09380)">
<path d="M150 150Q225 60 315 120" stroke="#222" stroke-width="44" fill="none"/>
<path d="M150 150Q225 60 315 120" stroke="#777" stroke-width="13" fill="none" transform="translate(8,-9)"/>
<path d="M68 185L105 85L178 168Z" fill="#000"/>
<circle cx="215" cy="232" r="60" fill="#f6f6f6" stroke="#000" stroke-width="14"/>
<path d="M172 275L115 330" stroke="#000" stroke-width="22"/>
<rect x="432" y="62" width="272" height="240" fill="#c6c6c6" stroke="#000" stroke-width="14"/>
<path d="M568 62V302M432 185H704" stroke="#000" stroke-width="14"/>
<rect x="578" y="70" width="50" height="12" fill="#1b2aa5"/>
<path d="M800 250H1095" stroke="#777" stroke-width="6"/>
<path d="M815 200Q820 170 905 162L935 128H1010Q1045 150 1050 185L1065 195V215L1040 225H830Q812 220 815 200Z" fill="#e3131b"/>
<path d="M905 162L935 128H1010Q1040 148 1048 180" fill="none" stroke="#ff6b6b" stroke-width="8"/>
<rect x="950" y="140" width="62" height="26" rx="4" fill="#fff"/>
<circle cx="868" cy="220" r="24" fill="#111"/><circle cx="868" cy="220" r="11" fill="#ddd"/>
<circle cx="1015" cy="220" r="24" fill="#111"/><circle cx="1015" cy="220" r="11" fill="#ddd"/>
<path d="M1178 255L1290 128L1468 180L1395 335Z" fill="#eeeeee" stroke="#333" stroke-width="6"/>
<path d="M1215 213L1420 282M1253 170L1444 231M1250 282L1350 145M1322 308L1408 163" stroke="#333" stroke-width="6"/>
<path d="M1340 212L1375 155" stroke="#0c9b12" stroke-width="14"/><path d="M1345 222L1438 250" stroke="#d01818" stroke-width="14"/>
<rect x="1305" y="200" width="34" height="36" fill="#fff" stroke="#000" stroke-width="11"/>
<circle cx="1685" cy="190" r="115" fill="none" stroke="#444" stroke-width="8"/>
<path d="M1700 195H1830" stroke="#000" stroke-width="11"/>
<rect x="1660" y="175" width="38" height="38" fill="#fff" stroke="#000" stroke-width="11"/>
</g>
<path d="M573.5 183.5H567.0L573.5 177.0Z" fill="#85868c"/>
<path d="M608.5 183.5H602.0L608.5 177.0Z" fill="#85868c"/>
<path d="M643.5 183.5H637.0L643.5 177.0Z" fill="#85868c"/>
<path d="M678.5 183.5H672.0L678.5 177.0Z" fill="#85868c"/>
<path d="M713.5 183.5H707.0L713.5 177.0Z" fill="#85868c"/>
<path d="M748.5 183.5H742.0L748.5 177.0Z" fill="#85868c"/>
<path d="M783.5 183.5H777.0L783.5 177.0Z" fill="#85868c"/>
<path d="M818.5 183.5H812.0L818.5 177.0Z" fill="#85868c"/>
<path d="M853.5 183.5H847.0L853.5 177.0Z" fill="#85868c"/>
<path d="M888.5 183.5H882.0L888.5 177.0Z" fill="#85868c"/>
<path d="M958.5 183.5H952.0L958.5 177.0Z" fill="#85868c"/>
<path d="M993.5 183.5H987.0L993.5 177.0Z" fill="#85868c"/>
<path d="M1028.5 183.5H1022.0L1028.5 177.0Z" fill="#85868c"/>
<path d="M1063.5 183.5H1057.0L1063.5 177.0Z" fill="#85868c"/>
<path d="M1098.5 183.5H1092.0L1098.5 177.0Z" fill="#85868c"/>
<path d="M1133.5 183.5H1127.0L1133.5 177.0Z" fill="#85868c"/>
<path d="M1168.5 183.5H1162.0L1168.5 177.0Z" fill="#85868c"/>
<g transform="translate(712,148) scale(0.09380)">
<path d="M300 48H345V95M62 290V332H105" stroke="#222" stroke-width="14" fill="none"/>
<circle cx="155" cy="145" r="40" fill="#ffe600" stroke="#b06000" stroke-width="11"/>
<rect x="222" y="135" width="80" height="75" fill="#ffe600" stroke="#b06000" stroke-width="11"/>
<path d="M185 222L228 292H142Z" fill="#f6f6f6" stroke="#b06000" stroke-width="11" stroke-linejoin="round"/>
<path d="M575 68C690 68 690 170 640 215C615 240 612 270 608 295Q600 320 572 320Q545 320 538 295C535 270 535 240 510 215C455 170 465 68 575 68Z" fill="#a9a9a9" stroke="#000" stroke-width="14"/>
<path d="M545 300Q572 318 600 300L600 280H545Z" fill="#efefef"/>
<ellipse cx="545" cy="130" rx="22" ry="30" fill="#d8d8d8" opacity="0.7"/>
<path d="M900 160V130C900 65 995 65 995 130V160" fill="none" stroke="#000" stroke-width="26"/>
<rect x="872" y="158" width="150" height="132" rx="12" fill="#b4b4b4" stroke="#000" stroke-width="14"/>
<path d="M905 195H990M905 225H990M905 255H990" stroke="#e4e4e4" stroke-width="14"/>
<path d="M1208 80L1435 128V250L1298 315L1208 195Z" fill="#fff" stroke="#000" stroke-width="14" stroke-linejoin="round"/>
<path d="M1212 84L1432 130V150L1300 205L1215 125Z" fill="#ff8c5a"/>
<path d="M1300 205L1432 150V190L1300 240Z" fill="#e01010"/>
<path d="M1300 240L1432 190V222L1300 272Z" fill="#dcdcdc"/>
<path d="M1300 272L1432 222V248L1298 310Z" fill="#14267e"/>
<path d="M1215 125L1300 205V240L1214 160Z" fill="#fff"/>
<path d="M1214 160L1300 240V310L1212 195Z" fill="#2a44d0"/>
<path d="M1208 80L1435 128V250L1298 315L1208 195Z" fill="none" stroke="#000" stroke-width="14" stroke-linejoin="round"/>
<path d="M1695 188L1692.6 66.0A122 122 0 0 1 1718.6 68.3Z" fill="#ff1500"/><path d="M1695 188L1713.8 67.5A122 122 0 0 1 1739.0 74.2Z" fill="#ff3f00"/><path d="M1695 188L1734.4 72.5A122 122 0 0 1 1758.1 83.6Z" fill="#ff6a00"/><path d="M1695 188L1753.9 81.1A122 122 0 0 1 1775.3 96.1Z" fill="#ff9400"/><path d="M1695 188L1771.5 93.0A122 122 0 0 1 1790.0 111.5Z" fill="#ffbf00"/><path d="M1695 188L1786.9 107.7A122 122 0 0 1 1801.9 129.1Z" fill="#ffe900"/><path d="M1695 188L1799.4 124.9A122 122 0 0 1 1810.5 148.6Z" fill="#e9ff00"/><path d="M1695 188L1808.8 144.0A122 122 0 0 1 1815.5 169.2Z" fill="#bfff00"/><path d="M1695 188L1814.7 164.4A122 122 0 0 1 1817.0 190.4Z" fill="#94ff00"/><path d="M1695 188L1817.0 185.6A122 122 0 0 1 1814.7 211.6Z" fill="#6aff00"/><path d="M1695 188L1815.5 206.8A122 122 0 0 1 1808.8 232.0Z" fill="#3fff00"/><path d="M1695 188L1810.5 227.4A122 122 0 0 1 1799.4 251.1Z" fill="#15ff00"/><path d="M1695 188L1801.9 246.9A122 122 0 0 1 1786.9 268.3Z" fill="#00ff15"/><path d="M1695 188L1790.0 264.5A122 122 0 0 1 1771.5 283.0Z" fill="#00ff3f"/><path d="M1695 188L1775.3 279.9A122 122 0 0 1 1753.9 294.9Z" fill="#00ff6a"/><path d="M1695 188L1758.1 292.4A122 122 0 0 1 1734.4 303.5Z" fill="#00ff94"/><path d="M1695 188L1739.0 301.8A122 122 0 0 1 1713.8 308.5Z" fill="#00ffbf"/><path d="M1695 188L1718.6 307.7A122 122 0 0 1 1692.6 310.0Z" fill="#00ffe9"/><path d="M1695 188L1697.4 310.0A122 122 0 0 1 1671.4 307.7Z" fill="#00e9ff"/><path d="M1695 188L1676.2 308.5A122 122 0 0 1 1651.0 301.8Z" fill="#00bfff"/><path d="M1695 188L1655.6 303.5A122 122 0 0 1 1631.9 292.4Z" fill="#0094ff"/><path d="M1695 188L1636.1 294.9A122 122 0 0 1 1614.7 279.9Z" fill="#006aff"/><path d="M1695 188L1618.5 283.0A122 122 0 0 1 1600.0 264.5Z" fill="#003fff"/><path d="M1695 188L1603.1 268.3A122 122 0 0 1 1588.1 246.9Z" fill="#0015ff"/><path d="M1695 188L1590.6 251.1A122 122 0 0 1 1579.5 227.4Z" fill="#1500ff"/><path d="M1695 188L1581.2 232.0A122 122 0 0 1 1574.5 206.8Z" fill="#3f00ff"/><path d="M1695 188L1575.3 211.6A122 122 0 0 1 1573.0 185.6Z" fill="#6a00ff"/><path d="M1695 188L1573.0 190.4A122 122 0 0 1 1575.3 164.4Z" fill="#9400ff"/><path d="M1695 188L1574.5 169.2A122 122 0 0 1 1581.2 144.0Z" fill="#bf00ff"/><path d="M1695 188L1579.5 148.6A122 122 0 0 1 1590.6 124.9Z" fill="#e900ff"/><path d="M1695 188L1588.1 129.1A122 122 0 0 1 1603.1 107.7Z" fill="#ff00e9"/><path d="M1695 188L1600.0 111.5A122 122 0 0 1 1618.5 93.0Z" fill="#ff00bf"/><path d="M1695 188L1614.7 96.1A122 122 0 0 1 1636.1 81.1Z" fill="#ff0094"/><path d="M1695 188L1631.9 83.6A122 122 0 0 1 1655.6 72.5Z" fill="#ff006a"/><path d="M1695 188L1651.0 74.2A122 122 0 0 1 1676.2 67.5Z" fill="#ff003f"/><path d="M1695 188L1671.4 68.3A122 122 0 0 1 1697.4 66.0Z" fill="#ff0015"/>
<circle cx="1695" cy="188" r="122" fill="none" stroke="#000" stroke-width="14"/>
<circle cx="1695" cy="190" r="68" fill="#fff"/>
</g>
<g transform="translate(887,148) scale(0.09380)">
<circle cx="200" cy="190" r="115" fill="url(#gWhiteBall)" stroke="#000" stroke-width="14"/>
<path d="M88 215Q200 260 312 215" stroke="#000" stroke-width="12" fill="none"/><path d="M165 80Q140 190 175 300" stroke="#000" stroke-width="12" fill="none"/>
<path d="M435 40V350M490 40V350M545 40V350M600 40V350M655 40V350M710 40V350M420 55H735M420 105H735M420 160H735M420 215H735M420 270H735M420 325H735" stroke="#8f8f8f" stroke-width="9"/>
<circle cx="575" cy="190" r="115" fill="url(#gWhiteBall)" stroke="#000" stroke-width="14"/>
<path d="M463 215Q575 260 687 215" stroke="#000" stroke-width="12" fill="none"/><path d="M540 80Q515 190 550 300" stroke="#000" stroke-width="12" fill="none"/>
<ellipse cx="960" cy="270" rx="135" ry="35" fill="#000" opacity="0.35"/>
<circle cx="945" cy="180" r="115" fill="url(#gBlueBall)" stroke="#000" stroke-width="10"/>
<ellipse cx="895" cy="128" rx="38" ry="22" transform="rotate(-35 895 128)" fill="#fff" opacity="0.85"/>
<path d="M965 262Q1010 250 1025 210" stroke="#7fd6ff" stroke-width="12" fill="none" opacity="0.8"/>
<circle cx="1290" cy="190" r="95" fill="url(#gGlow)"/>
<path d="M1305 92L1465 48L1430 205Z" fill="#ff9a18" stroke="#000" stroke-width="12" stroke-linejoin="round"/>
<path d="M1305 92L1430 205Q1390 200 1350 160Q1312 122 1305 92Z" fill="#fff3d8" stroke="#000" stroke-width="10" stroke-linejoin="round"/>
<polygon points="1786,158 1834,155 1834,215 1786,212 1778,232 1813,264 1771,306 1739,271 1719,279 1722,327 1662,327 1665,279 1645,271 1613,306 1571,264 1606,232 1598,212 1550,215 1550,155 1598,158 1606,138 1571,106 1613,64 1645,99 1665,91 1662,43 1722,43 1719,91 1739,99 1771,64 1813,106 1778,138" fill="#ffd45e" stroke="#b46a10" stroke-width="12" stroke-linejoin="round"/>
<circle cx="1692" cy="195" r="52" fill="#e9eaf0" stroke="#b46a10" stroke-width="8"/>
<rect x="1662" y="105" width="60" height="110" rx="16" fill="#a3a3a3" stroke="#6f6f6f" stroke-width="6"/><rect x="1675" y="112" width="16" height="95" rx="8" fill="#d8d8d8"/>
</g>
<g transform="translate(1062,148) scale(0.09380)">
<path d="M55 68H170M55 210H170M182 230V338M330 230V338" stroke="#222" stroke-width="18"/>
<rect x="168" y="50" width="38" height="38" fill="#fff" stroke="#000" stroke-width="11"/>
<rect x="168" y="188" width="38" height="38" fill="#fff" stroke="#000" stroke-width="11"/>
<rect x="305" y="188" width="38" height="38" fill="#fff" stroke="#000" stroke-width="11"/>
<path d="M92 95V182M210 302H300" stroke="#000" stroke-width="11"/>
<path d="M92 88L108 118H76ZM92 190L108 160H76ZM204 302L232 288V316ZM306 302L278 288V316Z" fill="#000"/>
<circle cx="575" cy="190" r="140" fill="url(#gGreenBall)" stroke="#000" stroke-width="16"/>
<path d="M550 60V190M560 190Q600 130 690 105" stroke="#33531e" stroke-width="8" fill="none"/>
<path d="M470 205L485 180L500 195L520 165L545 190L570 215L560 250L610 280L660 265L650 290L560 295L520 320L470 300L445 250Z" fill="#000"/>
<circle cx="950" cy="190" r="130" fill="url(#gHelp)"/>
<text x="950" y="298" font-family="Liberation Serif, serif" font-weight="bold" font-size="300" text-anchor="middle" fill="#fff">?</text>
</g></svg>
<svg class="b" style="left:0;top:204px" width="150" height="390" viewBox="0 204 150 390"><defs>
<linearGradient id="lb1" x1="0" y1="0" x2="1" y2="1"><stop offset="0" stop-color="#b9c6ff"/><stop offset="1" stop-color="#3f5be0"/></linearGradient>
<linearGradient id="lb2" x1="0" y1="0" x2="0" y2="1"><stop offset="0" stop-color="#c4d0ff"/><stop offset="1" stop-color="#4560e2"/></linearGradient>
<radialGradient id="lbs" cx="0.4" cy="0.3" r="0.8"><stop offset="0" stop-color="#d5ddff"/><stop offset="0.5" stop-color="#6f88f0"/><stop offset="1" stop-color="#2a43c4"/></radialGradient>
<linearGradient id="lor" x1="0" y1="0" x2="0" y2="1"><stop offset="0" stop-color="#ffd21a"/><stop offset="1" stop-color="#ff6a00"/></linearGradient>
<linearGradient id="lor2" x1="0" y1="0" x2="1" y2="1"><stop offset="0" stop-color="#ffd21a"/><stop offset="1" stop-color="#ff9500"/></linearGradient>
<linearGradient id="lgw" x1="0" y1="0" x2="1" y2="1"><stop offset="0" stop-color="#ffffff"/><stop offset="1" stop-color="#bdbdbd"/></linearGradient>
<linearGradient id="lgw2" x1="0" y1="0" x2="1" y2="0"><stop offset="0" stop-color="#f2f2f2"/><stop offset="1" stop-color="#9a9a9a"/></linearGradient>
</defs><g transform="translate(0,204) scale(0.07817)">
<path d="M170 115V330L228 282L268 365L300 348L262 268L325 262Z" fill="#fff" stroke="#000" stroke-width="13" stroke-linejoin="miter"/>
<circle cx="683" cy="233" r="34" fill="#fff" stroke="#000" stroke-width="13"/>
<path d="M1028 352L1105 148L1250 308" stroke="#000" stroke-width="14" fill="none"/>
<rect x="1083.0" y="126.0" width="44" height="44" fill="#fff" stroke="#000" stroke-width="13"/><rect x="1006.0" y="330.0" width="44" height="44" fill="#fff" stroke="#000" stroke-width="13"/><rect x="1228.0" y="286.0" width="44" height="44" fill="#fff" stroke="#000" stroke-width="13"/>
<path d="M1458 150C1620 90 1700 180 1690 250C1680 340 1560 370 1458 340" stroke="#000" stroke-width="14" fill="none"/>
<rect x="1436.0" y="128.0" width="44" height="44" fill="#fff" stroke="#000" stroke-width="13"/><rect x="1660.0" y="76.0" width="44" height="44" fill="#fff" stroke="#000" stroke-width="13"/><rect x="1436.0" y="318.0" width="44" height="44" fill="#fff" stroke="#000" stroke-width="13"/><rect x="1693.0" y="350.0" width="44" height="44" fill="#fff" stroke="#000" stroke-width="13"/>
<circle cx="235" cy="680" r="145" stroke="#000" stroke-width="14" fill="none"/>
<path d="M245 675L335 582" stroke="#000" stroke-width="8"/>
<rect x="318.0" y="558.0" width="44" height="44" fill="#fff" stroke="#000" stroke-width="13"/><rect x="220.0" y="654.0" width="44" height="44" fill="#fff" stroke="#000" stroke-width="13"/>
<ellipse cx="695" cy="705" rx="160" ry="105" stroke="#000" stroke-width="14" fill="none"/>
<path d="M690 600V705H835" stroke="#000" stroke-width="7" fill="none"/>
<rect x="670.0" y="570.0" width="44" height="44" fill="#fff" stroke="#000" stroke-width="13"/><rect x="666.0" y="688.0" width="44" height="44" fill="#fff" stroke="#000" stroke-width="13"/><rect x="816.0" y="686.0" width="44" height="44" fill="#fff" stroke="#000" stroke-width="13"/>
<path d="M1030 565Q1170 590 1250 690" stroke="#000" stroke-width="14" fill="none"/>
<path d="M1030 565V820L1250 690" stroke="#000" stroke-width="6" fill="none"/>
<rect x="1006.0" y="541.0" width="44" height="44" fill="#fff" stroke="#000" stroke-width="13"/><rect x="1228.0" y="668.0" width="44" height="44" fill="#fff" stroke="#000" stroke-width="13"/><rect x="1006.0" y="798.0" width="44" height="44" fill="#fff" stroke="#000" stroke-width="13"/>
<rect x="1455" y="600" width="265" height="172" fill="none" stroke="#000" stroke-width="14"/>
<rect x="1693.0" y="588.0" width="44" height="44" fill="#fff" stroke="#000" stroke-width="13"/><rect x="1436.0" y="750.0" width="44" height="44" fill="#fff" stroke="#000" stroke-width="13"/>
</g>
<g transform="translate(0,274) scale(0.07817)">
<path d="M105 235L170 120H305L370 235L305 350H170Z" stroke="#000" stroke-width="14" fill="none"/>
<path d="M245 232H355" stroke="#000" stroke-width="7"/>
<rect x="221.0" y="208.0" width="44" height="44" fill="#fff" stroke="#000" stroke-width="13"/><rect x="336.0" y="206.0" width="44" height="44" fill="#fff" stroke="#000" stroke-width="13"/>
<path d="M565 118H825V350" stroke="#888" stroke-width="6" fill="none"/>
<path d="M565 118Q820 95 822 350" stroke="#111" stroke-width="22" fill="none"/>
<rect x="541.0" y="96.0" width="44" height="44" fill="#fff" stroke="#000" stroke-width="13"/><rect x="796.0" y="330.0" width="44" height="44" fill="#fff" stroke="#000" stroke-width="13"/>
<path d="M1075 118L1265 115L1185 372L1010 292Z" fill="url(#lb1)" stroke="#000" stroke-width="14" stroke-linejoin="round"/>
<path d="M1168 118Q1120 230 1098 332M1040 205Q1130 225 1230 245" stroke="#000" stroke-width="11" fill="none"/>
<rect x="1053.0" y="93.0" width="44" height="44" fill="#fff" stroke="#000" stroke-width="13"/><rect x="1246.0" y="93.0" width="44" height="44" fill="#fff" stroke="#000" stroke-width="13"/><rect x="988.0" y="270.0" width="44" height="44" fill="#fff" stroke="#000" stroke-width="13"/><rect x="1163.0" y="350.0" width="44" height="44" fill="#fff" stroke="#000" stroke-width="13"/>
<path d="M1440 172L1540 92Q1700 110 1710 230V310L1598 390V290Q1600 200 1540 188Z" fill="#fff" stroke="#000" stroke-width="14" stroke-linejoin="round"/>
<path d="M1540 188L1625 118Q1700 160 1710 230L1598 290Q1595 210 1540 188Z" fill="url(#lb2)" stroke="#000" stroke-width="9"/>
<path d="M105 625L215 545L365 585V740L262 825L105 775Z" fill="#5a76ea" stroke="#000" stroke-width="14" stroke-linejoin="round"/>
<path d="M105 625L215 545L365 585L262 665Z" fill="#b7c4fb"/><path d="M262 665L365 585V740L262 825Z" fill="#334bc0"/>
<path d="M105 625L262 665L365 585M262 665V825" stroke="#000" stroke-width="10" fill="none"/>
<path d="M105 625L215 545L365 585V740L262 825L105 775Z" fill="none" stroke="#000" stroke-width="14" stroke-linejoin="round"/>
<circle cx="745" cy="630" r="110" fill="url(#lbs)" stroke="#000" stroke-width="13"/>
<path d="M640 665Q745 690 852 650M718 525Q690 630 735 738" stroke="#000" stroke-width="9" fill="none" opacity="0.75"/>
<circle cx="632" cy="748" r="110" fill="url(#lbs)" stroke="#000" stroke-width="13"/>
<path d="M525 780Q632 808 738 770M605 642Q578 748 622 856" stroke="#000" stroke-width="9" fill="none" opacity="0.75"/>
<ellipse cx="1140" cy="560" rx="92" ry="42" fill="none" stroke="#000" stroke-width="13"/>
<path d="M965 655Q1140 740 1310 655V800Q1140 890 965 800Z" fill="url(#lb2)" stroke="#000" stroke-width="14" stroke-linejoin="round"/>
<ellipse cx="1138" cy="780" rx="85" ry="38" fill="#aab8f8" stroke="#fff" stroke-width="18"/>
<path d="M1570 545L1755 610Q1690 690 1710 760L1610 835L1420 770Q1500 680 1570 545Z" fill="url(#lb1)" stroke="#000" stroke-width="14" stroke-linejoin="round"/>
<path d="M1520 630Q1620 640 1730 660M1470 710Q1580 720 1705 740M1650 575Q1580 700 1515 800M1665 790L1560 590M1450 765L1740 620" stroke="#000" stroke-width="8" fill="none" opacity="0.8"/>
</g>
<g transform="translate(0,344) scale(0.07817)">
<g transform="rotate(-35 300 300)"><path d="M238 238H281.4Q265.9 194.60000000000002 300 194.60000000000002Q334.1 194.60000000000002 318.6 238H362V281.4Q405.4 265.9 405.4 300Q405.4 334.1 362 318.6V362H318.6Q331.0 327.9 300 327.9Q269.0 327.9 281.4 362H238V318.6Q194.60000000000002 334.1 194.60000000000002 300Q194.60000000000002 265.9 238 281.4Z" fill="#fff" stroke="#000" stroke-width="13" stroke-linejoin="round"/></g>
<g transform="rotate(-35 185 175)"><path d="M123 113H166.4Q150.9 69.60000000000001 185 69.60000000000001Q219.1 69.60000000000001 203.6 113H247V156.4Q290.4 140.9 290.4 175Q290.4 209.1 247 193.6V237H203.6Q216.0 202.9 185 202.9Q154.0 202.9 166.4 237H123V193.6Q79.60000000000001 209.1 79.60000000000001 175Q79.60000000000001 140.9 123 156.4Z" fill="url(#lor2)" stroke="#000" stroke-width="13" stroke-linejoin="round"/></g>
<path d="M515 415V240L580 110L590 290L800 98L715 320L860 325L725 385L750 415Z" fill="url(#lor)" stroke="#000" stroke-width="10" stroke-linejoin="miter"/>
<path d="M515 415V240L580 110" stroke="#ff9a1a" stroke-width="10" fill="none"/><path d="M515 415H750" stroke="#ffb31a" stroke-width="10"/>
<rect x="965" y="238" width="195" height="78" fill="#fff" stroke="#222" stroke-width="14"/>
<rect x="1150" y="295" width="125" height="72" transform="rotate(42 1150 295)" fill="#fff" stroke="#222" stroke-width="13"/>
<path d="M1125 100H1238L1132 318Z" fill="#13268a"/>
<rect x="1428" y="265" width="295" height="82" fill="#fff" stroke="#222" stroke-width="14"/>
<path d="M1585 130H1700L1590 352Z" fill="#13268a"/>
<circle cx="243" cy="630" r="72" fill="#000"/><circle cx="185" cy="738" r="72" fill="#000"/><circle cx="308" cy="728" r="72" fill="#000"/>
<circle cx="243" cy="632" r="55" fill="#6d88f8"/><circle cx="188" cy="735" r="55" fill="#fff"/><circle cx="305" cy="728" r="55" fill="#14267e"/>
<circle cx="690" cy="625" r="56" fill="#6d88f8" stroke="#000" stroke-width="13"/><circle cx="610" cy="752" r="56" fill="#fff" stroke="#000" stroke-width="13"/><circle cx="770" cy="752" r="56" fill="#14267e" stroke="#000" stroke-width="13"/>
<path d="M972 622Q1200 540 1230 855" stroke="#111" stroke-width="26" fill="none"/>
<rect x="1035.0" y="590.0" width="40" height="40" fill="#fff" stroke="#000" stroke-width="11"/><rect x="1200.0" y="750.0" width="40" height="40" fill="#fff" stroke="#000" stroke-width="11"/>
<path d="M1420 630Q1680 580 1660 850" stroke="#000" stroke-width="28" fill="none"/>
<path d="M1410 552H1520M1570 575L1720 720M1722 760V870" stroke="#000" stroke-width="9" stroke-dasharray="12 10" fill="none"/>
<rect x="1518.0" y="526.0" width="44" height="44" fill="#fff" stroke="#000" stroke-width="12"/><rect x="1708.0" y="720.0" width="44" height="44" fill="#fff" stroke="#000" stroke-width="12"/>
</g>
<g transform="translate(0,414) scale(0.07817)">
<g transform="translate(235,0) scale(0.78,1) translate(-235,0)"><text x="246" y="408" font-family="Liberation Serif, serif" font-weight="bold" font-size="505" text-anchor="middle" fill="#1a2a8a" stroke="#000" stroke-width="20" stroke-linejoin="round">T</text>
<text x="232" y="398" font-family="Liberation Serif, serif" font-weight="bold" font-size="505" text-anchor="middle" fill="url(#lb2)" stroke="#000" stroke-width="12" stroke-linejoin="round">T</text></g>
<rect x="555" y="288" width="95" height="90" fill="url(#lgw)" stroke="#000" stroke-width="14"/>
<rect x="750" y="90" width="92" height="92" fill="url(#lb1)" stroke="#000" stroke-width="14"/>
<path d="M640 290L735 200M735 200H685M735 200V250" stroke="#000" stroke-width="13" fill="none"/>
<rect x="1002" y="92" width="92" height="92" fill="url(#lb1)" stroke="#000" stroke-width="14"/>
<rect x="1195" y="140" width="92" height="92" fill="url(#lb1)" stroke="#000" stroke-width="14"/>
<rect x="1135" y="188" width="92" height="92" fill="url(#lb1)" stroke="#000" stroke-width="14"/>
<rect x="1002" y="288" width="92" height="90" fill="url(#lgw)" stroke="#000" stroke-width="14"/>
<rect x="1195" y="318" width="92" height="92" fill="url(#lb1)" stroke="#000" stroke-width="14"/>
<rect x="1415" y="88" width="85" height="225" fill="url(#lgw)" stroke="#000" stroke-width="14"/>
<path d="M1540 328L1698 175L1755 232L1592 385Z" fill="url(#lb1)" stroke="#000" stroke-width="14" stroke-linejoin="miter"/>
<path d="M1500 118Q1590 120 1650 180M1650 180L1595 178M1650 180L1640 128" stroke="#000" stroke-width="11" fill="none"/>
<path d="M105 625L215 545L375 590V745L265 840L105 785Z" fill="#4e6ae6" stroke="#000" stroke-width="14" stroke-linejoin="round"/>
<path d="M105 625L215 545L375 590L265 675Z" fill="#b7c4fb"/><path d="M265 675L375 590V745L265 840Z" fill="#334bc0"/>
<path d="M205 748L330 700V790L265 840L205 820Z" fill="#fff" stroke="#000" stroke-width="9"/><path d="M290 740L330 712V790L290 815Z" fill="#999"/>
<path d="M105 625L215 545L375 590V745L265 840L105 785Z" fill="none" stroke="#000" stroke-width="14" stroke-linejoin="round"/>
<path d="M525 800L610 712H860L790 800Z" fill="#6d88f8" stroke="#222" stroke-width="13" stroke-linejoin="round"/>
<path d="M592 750V600M690 750V600M788 750V600" stroke="#a59f9f" stroke-width="26"/>
<path d="M592 548L632 610H552ZM690 548L730 610H650ZM788 548L828 610H748Z" fill="#a59f9f"/>
<rect x="985" y="540" width="68" height="66" fill="url(#lb1)" stroke="#000" stroke-width="15"/><rect x="1095" y="540" width="68" height="66" fill="url(#lb1)" stroke="#000" stroke-width="15"/><rect x="1205" y="540" width="68" height="66" fill="url(#lb1)" stroke="#000" stroke-width="15"/><rect x="985" y="650" width="68" height="66" fill="url(#lb1)" stroke="#000" stroke-width="15"/><rect x="1095" y="650" width="68" height="66" fill="url(#lb1)" stroke="#000" stroke-width="15"/><rect x="1205" y="650" width="68" height="66" fill="url(#lb1)" stroke="#000" stroke-width="15"/><rect x="985" y="760" width="68" height="66" fill="#fff" stroke="#000" stroke-width="15"/><rect x="1095" y="760" width="68" height="66" fill="url(#lb1)" stroke="#000" stroke-width="15"/><rect x="1205" y="760" width="68" height="66" fill="url(#lb1)" stroke="#000" stroke-width="15"/>
<rect x="1512" y="545" width="148" height="72" fill="url(#lgw)" stroke="#000" stroke-width="14"/>
<rect x="1545" y="650" width="85" height="58" fill="url(#lgw)" stroke="#000" stroke-width="14"/>
<rect x="1525" y="752" width="120" height="92" fill="url(#lgw)" stroke="#000" stroke-width="14"/>
<path d="M1587 515V865" stroke="#e01616" stroke-width="22"/>
</g>
<g transform="translate(0,484) scale(0.07817)">
<path d="M230 85L365 150L290 330L235 250Z" fill="#fff" stroke="#000" stroke-width="13" stroke-linejoin="round"/>
<path d="M105 160L150 125L235 160L225 350L105 335Z" fill="url(#lgw)" stroke="#000" stroke-width="13" stroke-linejoin="round"/>
<path d="M260 165L380 160Q370 260 300 385L265 405L185 365Q250 260 260 165Z" fill="url(#lb1)" stroke="#000" stroke-width="13" stroke-linejoin="round"/>
<rect x="618" y="75" width="52" height="335" fill="#7f97f7" stroke="#111" stroke-width="14"/>
<circle cx="530" cy="162" r="34" fill="#111"/><circle cx="757" cy="158" r="34" fill="#111"/>
<path d="M520 215H640L570 290L612 320L598 410" stroke="#111" stroke-width="30" fill="none" stroke-linejoin="round"/>
<path d="M660 225L770 235L835 300L800 330L870 415" stroke="#111" stroke-width="28" fill="none" stroke-linejoin="round"/>
<path d="M985 268L1040 262L1062 318Q1150 180 1295 92Q1150 230 1060 395Q1030 320 985 268Z" fill="#000" stroke="#000" stroke-width="10" stroke-linejoin="round"/>
<path d="M1432 190L1515 120L1640 165L1600 330L1432 295Z" fill="#bdbcba" stroke="#000" stroke-width="13" stroke-linejoin="round"/>
<path d="M1432 190L1515 120L1640 165L1560 225Z" fill="#e6e6e6"/><path d="M1432 190L1560 225L1640 165" stroke="#000" stroke-width="9" fill="none"/>
<path d="M1655 140L1738 310Q1735 365 1655 365Q1580 360 1580 325Z" fill="url(#lgw2)" stroke="#000" stroke-width="13" stroke-linejoin="round"/>
<path d="M200 605L290 520L395 515V600L340 595L290 635Z" fill="#fff" stroke="#000" stroke-width="11" stroke-linejoin="round"/>
<rect x="385" y="512" width="35" height="92" fill="#000"/>
<path d="M215 610L285 545M240 622L305 560M265 632L325 578" stroke="#333" stroke-width="9" stroke-dasharray="9 7"/>
<path d="M105 800L235 650L370 770L262 860Z" fill="#f2c84c" stroke="#000" stroke-width="13" stroke-linejoin="round"/>
<path d="M235 650L370 770L262 860Z" fill="#c89c2c"/><path d="M235 650L262 860" stroke="#8a6a10" stroke-width="6"/>
<path d="M105 800L235 650L370 770L262 860Z" fill="none" stroke="#000" stroke-width="13" stroke-linejoin="round"/>
</g><path d="M72 240.5H65.5L72 234.0Z" fill="#85868c"/><path d="M107 240.5H100.5L107 234.0Z" fill="#85868c"/><path d="M142 240.5H135.5L142 234.0Z" fill="#85868c"/><path d="M36.5 275.5H30.0L36.5 269.0Z" fill="#85868c"/><path d="M72 275.5H65.5L72 269.0Z" fill="#85868c"/><path d="M107 275.5H100.5L107 269.0Z" fill="#85868c"/><path d="M142 275.5H135.5L142 269.0Z" fill="#85868c"/><path d="M36.5 310.5H30.0L36.5 304.0Z" fill="#85868c"/><path d="M72 310.5H65.5L72 304.0Z" fill="#85868c"/><path d="M107 310.5H100.5L107 304.0Z" fill="#85868c"/><path d="M142 310.5H135.5L142 304.0Z" fill="#85868c"/><path d="M36.5 345.5H30.0L36.5 339.0Z" fill="#85868c"/><path d="M72 345.5H65.5L72 339.0Z" fill="#85868c"/><path d="M107 345.5H100.5L107 339.0Z" fill="#85868c"/><path d="M142 345.5H135.5L142 339.0Z" fill="#85868c"/><path d="M36.5 380.5H30.0L36.5 374.0Z" fill="#85868c"/><path d="M36.5 415.5H30.0L36.5 409.0Z" fill="#85868c"/><path d="M142 415.5H135.5L142 409.0Z" fill="#85868c"/><path d="M72 450.5H65.5L72 444.0Z" fill="#85868c"/><path d="M36.5 485.5H30.0L36.5 479.0Z" fill="#85868c"/><path d="M72 485.5H65.5L72 479.0Z" fill="#85868c"/><path d="M107 485.5H100.5L107 479.0Z" fill="#85868c"/><path d="M142 485.5H135.5L142 479.0Z" fill="#85868c"/><path d="M36.5 520.5H30.0L36.5 514.0Z" fill="#85868c"/><path d="M72 520.5H65.5L72 514.0Z" fill="#85868c"/><path d="M107 520.5H100.5L107 514.0Z" fill="#85868c"/><path d="M142 520.5H135.5L142 514.0Z" fill="#85868c"/><path d="M36.5 555.5H30.0L36.5 549.0Z" fill="#85868c"/></svg>
<svg class="b" style="left:1668px;top:48px" width="251" height="100" viewBox="1668 48 251 100"><defs>
<linearGradient id="pmon" x1="0" y1="0" x2="1" y2="1"><stop offset="0" stop-color="#f4f4f4"/><stop offset="1" stop-color="#9c9c9c"/></linearGradient>
<linearGradient id="pfun" x1="0" y1="0" x2="1" y2="0"><stop offset="0" stop-color="#2238c8"/><stop offset="0.45" stop-color="#8aa4ff"/><stop offset="1" stop-color="#1a2db0"/></linearGradient>
<radialGradient id="phelp" cx="0.4" cy="0.3" r="0.75"><stop offset="0" stop-color="#6f8df2"/><stop offset="0.5" stop-color="#2a48c8"/><stop offset="1" stop-color="#0a1a7a"/></radialGradient>
</defs>
<g transform="translate(1668,48) scale(0.13080)">
<!-- layers tab icon -->
<polygon points="153.9,75.0 268.5,96.5 270.9,149.1 201.6,191.1 156.2,134.7" fill="#fff" /><polygon points="158.6,78.4 266.1,98.9 266.1,107.0 206.4,134.7 161.0,97.5" fill="#ff8c5a" /><polygon points="206.4,134.7 266.1,107.0 267.6,124.2 207.4,147.2" fill="#e01010" /><polygon points="207.4,147.2 267.6,124.2 268.5,140.5 206.4,163.4" fill="#d8d8d8" /><polygon points="206.4,163.4 268.5,140.5 269.5,149.1 202.6,188.3" fill="#14267e" /><polygon points="162.5,118.0 207.4,151.5 202.6,188.3 158.6,134.7" fill="#2a44d0" /><polygon points="153.9,75.0 268.5,96.5 270.9,149.1 201.6,191.1 156.2,134.7" fill="none" stroke="#000" stroke-width="7" stroke-linejoin="round"/>
<path d="M558 130L556.8 72.0A58 58 0 0 1 569.2 73.1Z" fill="#ff1500"/><path d="M558 130L566.9 72.7A58 58 0 0 1 578.9 75.9Z" fill="#ff3f00"/><path d="M558 130L576.7 75.1A58 58 0 0 1 588.0 80.4Z" fill="#ff6a00"/><path d="M558 130L586.0 79.2A58 58 0 0 1 596.2 86.3Z" fill="#ff9400"/><path d="M558 130L594.4 84.8A58 58 0 0 1 603.2 93.6Z" fill="#ffbf00"/><path d="M558 130L601.7 91.8A58 58 0 0 1 608.8 102.0Z" fill="#ffe900"/><path d="M558 130L607.6 100.0A58 58 0 0 1 612.9 111.3Z" fill="#e9ff00"/><path d="M558 130L612.1 109.1A58 58 0 0 1 615.3 121.1Z" fill="#bfff00"/><path d="M558 130L614.9 118.8A58 58 0 0 1 616.0 131.2Z" fill="#94ff00"/><path d="M558 130L616.0 128.8A58 58 0 0 1 614.9 141.2Z" fill="#6aff00"/><path d="M558 130L615.3 138.9A58 58 0 0 1 612.1 150.9Z" fill="#3fff00"/><path d="M558 130L612.9 148.7A58 58 0 0 1 607.6 160.0Z" fill="#15ff00"/><path d="M558 130L608.8 158.0A58 58 0 0 1 601.7 168.2Z" fill="#00ff15"/><path d="M558 130L603.2 166.4A58 58 0 0 1 594.4 175.2Z" fill="#00ff3f"/><path d="M558 130L596.2 173.7A58 58 0 0 1 586.0 180.8Z" fill="#00ff6a"/><path d="M558 130L588.0 179.6A58 58 0 0 1 576.7 184.9Z" fill="#00ff94"/><path d="M558 130L578.9 184.1A58 58 0 0 1 566.9 187.3Z" fill="#00ffbf"/><path d="M558 130L569.2 186.9A58 58 0 0 1 556.8 188.0Z" fill="#00ffe9"/><path d="M558 130L559.2 188.0A58 58 0 0 1 546.8 186.9Z" fill="#00e9ff"/><path d="M558 130L549.1 187.3A58 58 0 0 1 537.1 184.1Z" fill="#00bfff"/><path d="M558 130L539.3 184.9A58 58 0 0 1 528.0 179.6Z" fill="#0094ff"/><path d="M558 130L530.0 180.8A58 58 0 0 1 519.8 173.7Z" fill="#006aff"/><path d="M558 130L521.6 175.2A58 58 0 0 1 512.8 166.4Z" fill="#003fff"/><path d="M558 130L514.3 168.2A58 58 0 0 1 507.2 158.0Z" fill="#0015ff"/><path d="M558 130L508.4 160.0A58 58 0 0 1 503.1 148.7Z" fill="#1500ff"/><path d="M558 130L503.9 150.9A58 58 0 0 1 500.7 138.9Z" fill="#3f00ff"/><path d="M558 130L501.1 141.2A58 58 0 0 1 500.0 128.8Z" fill="#6a00ff"/><path d="M558 130L500.0 131.2A58 58 0 0 1 501.1 118.8Z" fill="#9400ff"/><path d="M558 130L500.7 121.1A58 58 0 0 1 503.9 109.1Z" fill="#bf00ff"/><path d="M558 130L503.1 111.3A58 58 0 0 1 508.4 100.0Z" fill="#e900ff"/><path d="M558 130L507.2 102.0A58 58 0 0 1 514.3 91.8Z" fill="#ff00e9"/><path d="M558 130L512.8 93.6A58 58 0 0 1 521.6 84.8Z" fill="#ff00bf"/><path d="M558 130L519.8 86.3A58 58 0 0 1 530.0 79.2Z" fill="#ff0094"/><path d="M558 130L528.0 80.4A58 58 0 0 1 539.3 75.1Z" fill="#ff006a"/><path d="M558 130L537.1 75.9A58 58 0 0 1 549.1 72.7Z" fill="#ff003f"/><path d="M558 130L546.8 73.1A58 58 0 0 1 559.2 72.0Z" fill="#ff0015"/>
<circle cx="558" cy="130" r="58" fill="none" stroke="#000" stroke-width="9"/><circle cx="558" cy="130" r="30" fill="#fff"/>
<rect x="840" y="66" width="125" height="100" fill="url(#pmon)" stroke="#000" stroke-width="14"/>
<path d="M880 170H925V185H955V195H850V185H880Z" fill="#000"/>
<path d="M1185 112L1208 135L1185 158M1222 112L1245 135L1222 158" stroke="#666" stroke-width="9" fill="none"/>
<g fill="#cbcbce"><circle cx="1645" cy="132" r="40"/><rect x="1633" y="78" width="24" height="30" transform="rotate(0 1645 132)"/><rect x="1633" y="78" width="24" height="30" transform="rotate(45 1645 132)"/><rect x="1633" y="78" width="24" height="30" transform="rotate(90 1645 132)"/><rect x="1633" y="78" width="24" height="30" transform="rotate(135 1645 132)"/><rect x="1633" y="78" width="24" height="30" transform="rotate(180 1645 132)"/><rect x="1633" y="78" width="24" height="30" transform="rotate(225 1645 132)"/><rect x="1633" y="78" width="24" height="30" transform="rotate(270 1645 132)"/><rect x="1633" y="78" width="24" height="30" transform="rotate(315 1645 132)"/></g><circle cx="1645" cy="132" r="18" fill="#dcdde3"/>
<path d="M1778 98L1850 168M1850 98L1778 168" stroke="#b3b3b6" stroke-width="12"/>
<!-- row 1 -->
<g transform="translate(-65.0,256.9)"><polygon points="153.9,75.0 268.5,96.5 270.9,149.1 201.6,191.1 156.2,134.7" fill="#fff" /><polygon points="158.6,78.4 266.1,98.9 266.1,107.0 206.4,134.7 161.0,97.5" fill="#ff8c5a" /><polygon points="206.4,134.7 266.1,107.0 267.6,124.2 207.4,147.2" fill="#e01010" /><polygon points="207.4,147.2 267.6,124.2 268.5,140.5 206.4,163.4" fill="#d8d8d8" /><polygon points="206.4,163.4 268.5,140.5 269.5,149.1 202.6,188.3" fill="#14267e" /><polygon points="162.5,118.0 207.4,151.5 202.6,188.3 158.6,134.7" fill="#2a44d0" /><polygon points="153.9,75.0 268.5,96.5 270.9,149.1 201.6,191.1 156.2,134.7" fill="none" stroke="#000" stroke-width="7" stroke-linejoin="round"/></g>
<path d="M180 398V452M153 425H207" stroke="#fff" stroke-width="26"/><path d="M180 402V448M157 425H203" stroke="#000" stroke-width="13"/>
<g stroke="#b5b5b8" stroke-width="7" fill="#e4e4e7"><path d="M295 335L360 340V375L330 395L298 365Z"/><path d="M360 385L425 392V425L390 448L362 415Z"/><path d="M305 400V438H340M340 438L325 428M340 438L325 448" fill="none"/></g>
<path d="M505 332L628 448M628 332L505 448" stroke="#b5b5b8" stroke-width="20"/><path d="M505 332L628 448M628 332L505 448" stroke="#e2e2e5" stroke-width="8"/>
<g stroke="#b5b5b8" stroke-width="7" fill="#e4e4e7"><path d="M770 330Q700 340 712 400Q725 440 770 445" fill="none"/><path d="M745 370L835 378V420L790 452L748 410Z"/><path d="M765 325L805 345L770 360" fill="none"/></g>
<path d="M925 415L985 345L1048 415Z" fill="#e0e0e3" stroke="#b5b5b8" stroke-width="8" stroke-linejoin="round"/>
<path d="M1138 358H1260L1198 428Z" fill="#e0e0e3" stroke="#b5b5b8" stroke-width="8" stroke-linejoin="round"/>
<path d="M1440 328V452L1365 390Z" fill="#e0e0e3" stroke="#b5b5b8" stroke-width="8" stroke-linejoin="round"/>
<path d="M1552 335Q1612 315 1672 335L1632 395V440Q1612 460 1595 440V395Z" fill="url(#pfun)" stroke="#0d1a80" stroke-width="8" stroke-linejoin="round"/>
<ellipse cx="1612" cy="336" rx="56" ry="12" fill="#2a3fc8" stroke="#0d1a80" stroke-width="6"/>
<!-- row 2 -->
<rect x="88" y="540" width="108" height="128" fill="#f4f4f4" stroke="#444" stroke-width="8"/>
<rect x="88" y="540" width="108" height="16" fill="#444"/>
<path d="M124 540V668M160 540V668M88 590H196M88 630H196" stroke="#444" stroke-width="7"/>
<path d="M305 552H412M305 603H412M305 655H412" stroke="#000" stroke-width="17" stroke-linecap="round"/>
<circle cx="565" cy="603" r="70" fill="url(#phelp)"/>
<text x="565" y="660" font-family="Liberation Serif, serif" font-weight="bold" font-size="160" text-anchor="middle" fill="#fff">?</text>
</g></svg>
<svg class="b" style="left:2px;top:4px;" width="20" height="20" viewBox="0 0 20 20"><rect width="20" height="20" fill="#000"/><path d="M0.3 0.1H5.2L7.4 2.2L9.6 6.3L11.8 9.4L15.5 10.7L19.8 11L11.4 19.2L0.3 10Z" fill="#fff"/><path d="M5 0.5Q4.2 5 1.4 7.5" stroke="#444" stroke-width="1.3" fill="none"/><path d="M4.5 9.6L8.8 13.4M4.2 11.8L7.6 14.2" stroke="#333" stroke-width="1.6"/><path d="M14.2 10.6L18.5 11.4" stroke="#222" stroke-width="1"/><rect x="14.6" y="1.6" width="3.6" height="3.4" rx="1" fill="none" stroke="#aaa" stroke-width="1.2"/><rect x="14.1" y="5" width="4.6" height="3.4" rx="1.2" fill="none" stroke="#aaa" stroke-width="1.2"/></svg>
<svg class="b" style="left:1760px;top:4px;" width="140" height="20" viewBox="0 0 140 20"><path d="M5 9.5H17" stroke="#85858a" stroke-width="1"/><rect x="63.3" y="7.2" width="9" height="8.8" rx="1.6" fill="none" stroke="#808085" stroke-width="1.1"/><path d="M66 4.6H72.8Q75 4.6 75 6.8V13.4" fill="none" stroke="#808085" stroke-width="1.1"/><path d="M122 4.2L133.9 15.8M133.9 4.2L122 15.8" stroke="#77777c" stroke-width="1"/></svg>
<svg class="b" style="left:126px;top:598px;" width="18" height="18" viewBox="0 0 18 18"><g fill="#cacace"><circle cx="9" cy="9" r="5.3"/><rect x="7.4" y="1.8" width="3.2" height="4" transform="rotate(0 9 9)"/><rect x="7.4" y="1.8" width="3.2" height="4" transform="rotate(45 9 9)"/><rect x="7.4" y="1.8" width="3.2" height="4" transform="rotate(90 9 9)"/><rect x="7.4" y="1.8" width="3.2" height="4" transform="rotate(135 9 9)"/><rect x="7.4" y="1.8" width="3.2" height="4" transform="rotate(180 9 9)"/><rect x="7.4" y="1.8" width="3.2" height="4" transform="rotate(225 9 9)"/><rect x="7.4" y="1.8" width="3.2" height="4" transform="rotate(270 9 9)"/><rect x="7.4" y="1.8" width="3.2" height="4" transform="rotate(315 9 9)"/></g><circle cx="9" cy="9" r="2.4" fill="#e9eaf0"/></svg>
<svg class="b" style="left:12px;top:620px;" width="24" height="22" viewBox="0 0 24 22"><circle cx="10.7" cy="11" r="8.5" fill="none" stroke="#555" stroke-width="0.9"/><path d="M12 11.2H22" stroke="#000" stroke-width="1.1"/><rect x="9" y="9.5" width="3.2" height="3.2" fill="#fff" stroke="#000" stroke-width="1.1"/></svg>
<svg class="b" style="left:58px;top:620px;" width="24" height="22" viewBox="0 0 24 22"><defs><linearGradient id="fng" x1="0" y1="0" x2="1" y2="0"><stop offset="0" stop-color="#555"/><stop offset="0.5" stop-color="#cfcfcf"/><stop offset="1" stop-color="#444"/></linearGradient></defs><path d="M4.5 5.2Q10.5 3 16.5 5.2L12 11.2V17.4Q10.5 18.6 9 17.4V11.2Z" fill="url(#fng)" stroke="#333" stroke-width="0.8"/><ellipse cx="10.5" cy="5.2" rx="5.6" ry="1.2" fill="#666"/><path d="M16.5 2.3H19.3V5M2.2 16.5V19.2H5" stroke="#222" stroke-width="1.1" fill="none"/></svg>
<svg class="b" style="left:1346px;top:996px;" width="14" height="18" viewBox="0 0 14 18"><path d="M4 8V5.2C4 1.6 10 1.6 10 5.2V8" fill="none" stroke="#b9b9be" stroke-width="1.3"/><rect x="2.6" y="7.6" width="8.8" height="7.4" rx="1" fill="#e3e6f3" stroke="#b9b9be" stroke-width="1.2"/></svg>
<div class="b" style="left:5px;top:651px;width:16px;height:15px;background:#fff;border:1px solid #b9c3dc;box-sizing:border-box;"></div>
<svg class="b" style="left:5px;top:651px;" width="16" height="15" viewBox="0 0 16 15"><path d="M2.5 8.0L7.5 12.6L13.7 2.7" stroke="#222" stroke-width="2.3" fill="none"/></svg>
<div class="b" style="left:5px;top:671px;width:16px;height:15px;background:#fff;border:1px solid #b9c3dc;box-sizing:border-box;"></div>
<div class="b" style="left:5px;top:691px;width:16px;height:15px;background:#fff;border:1px solid #b9c3dc;box-sizing:border-box;"></div>
<div class="b" style="left:5px;top:711px;width:16px;height:15px;background:#fff;border:1px solid #b9c3dc;box-sizing:border-box;"></div>
<svg class="b" style="left:5px;top:711px;" width="16" height="15" viewBox="0 0 16 15"><path d="M2.5 8.0L7.5 12.6L13.7 2.7" stroke="#222" stroke-width="2.3" fill="none"/></svg>
<div class="b" style="left:5px;top:731px;width:16px;height:15px;background:#fff;border:1px solid #b9c3dc;box-sizing:border-box;"></div>
<svg class="b" style="left:5px;top:731px;" width="16" height="15" viewBox="0 0 16 15"><path d="M2.5 8.0L7.5 12.6L13.7 2.7" stroke="#222" stroke-width="2.3" fill="none"/></svg>
<div class="b" style="left:5px;top:751px;width:16px;height:15px;background:#fff;border:1px solid #b9c3dc;box-sizing:border-box;"></div>
<div class="b" style="left:5px;top:771px;width:16px;height:15px;background:#fff;border:1px solid #b9c3dc;box-sizing:border-box;"></div>
<svg class="b" style="left:5px;top:771px;" width="16" height="15" viewBox="0 0 16 15"><path d="M2.5 8.0L7.5 12.6L13.7 2.7" stroke="#222" stroke-width="2.3" fill="none"/></svg>
<div class="b" style="left:5px;top:791px;width:16px;height:15px;background:#fff;border:1px solid #b9c3dc;box-sizing:border-box;"></div>
<svg class="b" style="left:5px;top:791px;" width="16" height="15" viewBox="0 0 16 15"><path d="M2.5 8.0L7.5 12.6L13.7 2.7" stroke="#222" stroke-width="2.3" fill="none"/></svg>
<div class="b" style="left:5px;top:811px;width:16px;height:15px;background:#fff;border:1px solid #b9c3dc;box-sizing:border-box;"></div>
<svg class="b" style="left:5px;top:811px;" width="16" height="15" viewBox="0 0 16 15"><path d="M2.5 8.0L7.5 12.6L13.7 2.7" stroke="#222" stroke-width="2.3" fill="none"/></svg>
<div class="b" style="left:5px;top:831px;width:16px;height:15px;background:#fff;border:1px solid #b9c3dc;box-sizing:border-box;"></div>
<div class="b" style="left:5px;top:851px;width:16px;height:15px;background:#fff;border:1px solid #b9c3dc;box-sizing:border-box;"></div>
<div class="b" style="left:5px;top:871px;width:16px;height:15px;background:#fff;border:1px solid #b9c3dc;box-sizing:border-box;"></div>
<div class="b" style="left:5px;top:892px;width:16px;height:15px;background:#fff;border:1px solid #b9c3dc;box-sizing:border-box;"></div>
<svg class="b" style="left:423px;top:973px;" width="13" height="13" viewBox="0 0 13 13"><path d="M6.5 1V12M1 6.5H12" stroke="#666" stroke-width="3.2" fill="none"/><path d="M6.5 2V11M2 6.5H11" stroke="#eee" stroke-width="1.2" fill="none"/></svg>
<span class="t" id="t0" style="left:28.84px;top:4.00px;font-size:15.5px;line-height:21px;color:#262626;transform:scaleX(0.9431);">aula dia 23.3dm (120 KB) - Rhino 8 Evaluation (52 Days Remaining) - [Top]</span>
<span class="t" id="t1" style="left:9.12px;top:29.00px;font-size:15.5px;line-height:21px;color:#262626;transform:scaleX(0.9293);">File</span>
<span class="t" id="t2" style="left:49.83px;top:29.00px;font-size:15.5px;line-height:21px;color:#262626;transform:scaleX(0.9687);">Edit</span>
<span class="t" id="t3" style="left:94.55px;top:29.00px;font-size:15.5px;line-height:21px;color:#262626;transform:scaleX(0.9312);">View</span>
<span class="t" id="t4" style="left:143.64px;top:29.00px;font-size:15.5px;line-height:21px;color:#262626;transform:scaleX(0.9052);">Curve</span>
<span class="t" id="t5" style="left:199.11px;top:29.00px;font-size:15.5px;line-height:21px;color:#262626;transform:scaleX(0.9167);">Surface</span>
<span class="t" id="t6" style="left:266.10px;top:29.00px;font-size:15.5px;line-height:21px;color:#262626;transform:scaleX(0.9324);">SubD</span>
<span class="t" id="t7" style="left:320.33px;top:29.00px;font-size:15.5px;line-height:21px;color:#262626;transform:scaleX(0.9800);">Solid</span>
<span class="t" id="t8" style="left:372.12px;top:29.00px;font-size:15.5px;line-height:21px;color:#262626;transform:scaleX(0.9352);">Mesh</span>
<span class="t" id="t9" style="left:424.77px;top:29.00px;font-size:15.5px;line-height:21px;color:#262626;transform:scaleX(1.0155);">Drafting</span>
<span class="t" id="t10" style="left:498.07px;top:29.00px;font-size:15.5px;line-height:21px;color:#262626;transform:scaleX(0.9449);">Transform</span>
<span class="t" id="t11" style="left:582.07px;top:29.00px;font-size:15.5px;line-height:21px;color:#262626;transform:scaleX(0.9645);">Tools</span>
<span class="t" id="t12" style="left:635.30px;top:29.00px;font-size:15.5px;line-height:21px;color:#262626;transform:scaleX(0.9392);">Analyze</span>
<span class="t" id="t13" style="left:704.89px;top:29.00px;font-size:15.5px;line-height:21px;color:#262626;transform:scaleX(0.9183);">Render</span>
<span class="t" id="t14" style="left:770.30px;top:29.00px;font-size:15.5px;line-height:21px;color:#262626;transform:scaleX(0.9798);">Window</span>
<span class="t" id="t15" style="left:842.79px;top:29.00px;font-size:15.5px;line-height:21px;color:#262626;transform:scaleX(0.9987);">Help</span>
<span class="t" id="t16" style="left:15.34px;top:54.00px;font-size:15.5px;line-height:21px;color:#262626;transform:scaleX(0.9571);">Enabled automatic CPlane alignment</span>
<span class="t" id="t17" style="left:15.33px;top:74.00px;font-size:15.5px;line-height:21px;color:#262626;transform:scaleX(0.9629);">Successfully read file &quot;C:\Users\Leonor\OneDrive - Universidade de Lisboa\Ambiente de Trabalho\aula dia 23.3dm&quot;</span>
<span class="t" id="t18" style="left:15.34px;top:99.00px;font-size:15.5px;line-height:21px;color:#000;font-weight:bold;transform:scaleX(0.9498);">Command:</span>
<span class="t" id="t19" style="left:26.84px;top:128.00px;font-size:15.5px;line-height:21px;color:#222;transform:scaleX(0.9536);">Standard</span>
<span class="t" id="t20" style="left:110.65px;top:128.00px;font-size:15.5px;line-height:21px;color:#70717a;transform:scaleX(0.9011);">CPlanes</span>
<span class="t" id="t21" style="left:187.85px;top:128.00px;font-size:15.5px;line-height:21px;color:#70717a;transform:scaleX(0.9275);">Set View</span>
<span class="t" id="t22" style="left:269.86px;top:128.00px;font-size:15.5px;line-height:21px;color:#70717a;transform:scaleX(0.9373);">Display</span>
<span class="t" id="t23" style="left:341.85px;top:128.00px;font-size:15.5px;line-height:21px;color:#70717a;transform:scaleX(0.9192);">Select</span>
<span class="t" id="t24" style="left:406.80px;top:128.00px;font-size:15.5px;line-height:21px;color:#70717a;transform:scaleX(0.9664);">Viewport Layout</span>
<span class="t" id="t25" style="left:539.80px;top:128.00px;font-size:15.5px;line-height:21px;color:#70717a;transform:scaleX(0.9730);">Visibility</span>
<span class="t" id="t26" style="left:620.07px;top:128.00px;font-size:15.5px;line-height:21px;color:#70717a;transform:scaleX(0.9304);">Transform</span>
<span class="t" id="t27" style="left:710.12px;top:128.00px;font-size:15.5px;line-height:21px;color:#70717a;transform:scaleX(0.9327);">Curve Tools</span>
<span class="t" id="t28" style="left:811.35px;top:128.00px;font-size:15.5px;line-height:21px;color:#70717a;transform:scaleX(0.9275);">Surface Tools</span>
<span class="t" id="t29" style="left:923.34px;top:128.00px;font-size:15.5px;line-height:21px;color:#70717a;transform:scaleX(0.9488);">Solid Tools</span>
<span class="t" id="t30" style="left:1019.35px;top:128.00px;font-size:15.5px;line-height:21px;color:#70717a;transform:scaleX(0.9349);">SubD Tools</span>
<span class="t" id="t31" style="left:1118.86px;top:128.00px;font-size:15.5px;line-height:21px;color:#70717a;transform:scaleX(0.9453);">Mesh Tools</span>
<span class="t" id="t32" style="left:1217.87px;top:128.00px;font-size:15.5px;line-height:21px;color:#70717a;transform:scaleX(0.9316);">Render Tools</span>
<span class="t" id="t33" style="left:1327.78px;top:128.00px;font-size:15.5px;line-height:21px;color:#70717a;transform:scaleX(1.0059);">Drafting</span>
<span class="t" id="t34" style="left:1406.84px;top:128.00px;font-size:15.5px;line-height:21px;color:#70717a;transform:scaleX(0.9592);">New in V8</span>
<span class="t" id="t35" style="left:160.80px;top:196.00px;font-size:15px;line-height:21px;color:#1d2733;font-weight:bold;transform:scaleX(1.0315);">Top</span>
<span class="t" id="t36" style="left:2.11px;top:596.00px;font-size:15.5px;line-height:21px;color:#77787f;transform:scaleX(0.9523);">Osnap</span>
<span class="t" id="t37" style="left:27.30px;top:648.00px;font-size:15.5px;line-height:21px;color:#222;transform:scaleX(0.9060);">End</span>
<span class="t" id="t38" style="left:27.26px;top:668.00px;font-size:15.5px;line-height:21px;color:#222;transform:scaleX(0.9378);">Near</span>
<span class="t" id="t39" style="left:27.27px;top:688.00px;font-size:15.5px;line-height:21px;color:#222;transform:scaleX(0.9365);">Point</span>
<span class="t" id="t40" style="left:27.14px;top:708.00px;font-size:15.5px;line-height:21px;color:#222;transform:scaleX(1.0439);">Mid</span>
<span class="t" id="t41" style="left:27.04px;top:728.00px;font-size:15.5px;line-height:21px;color:#222;transform:scaleX(0.9055);">Cen</span>
<span class="t" id="t42" style="left:27.22px;top:748.00px;font-size:15.5px;line-height:21px;color:#222;transform:scaleX(0.9704);">Int</span>
<span class="t" id="t43" style="left:27.33px;top:768.00px;font-size:15.5px;line-height:21px;color:#222;transform:scaleX(0.8834);">Perp</span>
<span class="t" id="t44" style="left:27.49px;top:788.00px;font-size:15.5px;line-height:21px;color:#222;transform:scaleX(0.8711);">Tan</span>
<span class="t" id="t45" style="left:27.00px;top:808.00px;font-size:15.5px;line-height:21px;color:#222;transform:scaleX(0.9581);">Quad</span>
<span class="t" id="t46" style="left:27.22px;top:828.00px;font-size:15.5px;line-height:21px;color:#222;transform:scaleX(0.9731);">Knot</span>
<span class="t" id="t47" style="left:27.70px;top:848.00px;font-size:15.5px;line-height:21px;color:#222;transform:scaleX(0.9171);">Vertex</span>
<span class="t" id="t48" style="left:27.25px;top:868.00px;font-size:15.5px;line-height:21px;color:#222;transform:scaleX(0.9473);">Project</span>
<span class="t" id="t49" style="left:27.22px;top:889.00px;font-size:15.5px;line-height:21px;color:#222;transform:scaleX(0.9709);">Disable</span>
<span class="t" id="t50" style="left:166.35px;top:968.00px;font-size:15.5px;line-height:21px;color:#222;transform:scaleX(1.0240);">Top</span>
<span class="t" id="t51" style="left:213.07px;top:968.00px;font-size:15.5px;line-height:21px;color:#75767e;transform:scaleX(0.9312);">Perspective</span>
<span class="t" id="t52" style="left:310.07px;top:968.00px;font-size:15.5px;line-height:21px;color:#75767e;transform:scaleX(1.0195);">Front</span>
<span class="t" id="t53" style="left:364.89px;top:968.00px;font-size:15.5px;line-height:21px;color:#75767e;transform:scaleX(0.9992);">Right</span>
<span class="t" id="t54" style="left:51.94px;top:995.00px;font-size:15.5px;line-height:21px;color:#333;transform:scaleX(0.9074);">CPlane</span>
<span class="t" id="t55" style="left:151.40px;top:995.00px;font-size:15.5px;line-height:21px;color:#333;transform:scaleX(0.9180);">x 35.27</span>
<span class="t" id="t56" style="left:258.30px;top:995.00px;font-size:15.5px;line-height:21px;color:#333;transform:scaleX(0.9101);">y 87.23</span>
<span class="t" id="t57" style="left:378.86px;top:995.00px;font-size:15.5px;line-height:21px;color:#333;transform:scaleX(0.9037);">z 0</span>
<span class="t" id="t58" style="left:479.81px;top:995.00px;font-size:15.5px;line-height:21px;color:#333;transform:scaleX(0.9852);">Meters</span>
<span class="t" id="t59" style="left:597.81px;top:995.00px;font-size:15.5px;line-height:21px;color:#333;transform:scaleX(0.9801);">Default</span>
<span class="t" id="t60" style="left:817.91px;top:995.00px;font-size:15.5px;line-height:21px;color:#333;transform:scaleX(0.9469);">Grid Snap</span>
<span class="t" id="t61" style="left:907.96px;top:995.00px;font-size:15.5px;line-height:21px;color:#333;transform:scaleX(1.0238);">Ortho</span>
<span class="t" id="t62" style="left:971.88px;top:995.00px;font-size:15.5px;line-height:21px;color:#333;transform:scaleX(0.9238);">Planar</span>
<span class="t" id="t63" style="left:1037.56px;top:995.00px;font-size:15.5px;line-height:21px;color:#222;font-weight:bold;transform:scaleX(0.9187);">Osnap</span>
<span class="t" id="t64" style="left:1104.47px;top:995.00px;font-size:15.5px;line-height:21px;color:#222;font-weight:bold;transform:scaleX(0.9360);">SmartTrack</span>
<span class="t" id="t65" style="left:1205.84px;top:995.00px;font-size:15.5px;line-height:21px;color:#222;font-weight:bold;transform:scaleX(0.9497);">Gumball (CPlane)</span>
<span class="t" id="t66" style="left:1373.37px;top:995.00px;font-size:15.5px;line-height:21px;color:#222;font-weight:bold;transform:scaleX(0.9539);">Auto CPlane (Object)</span>
<span class="t" id="t67" style="left:1541.95px;top:995.00px;font-size:15.5px;line-height:21px;color:#333;transform:scaleX(0.9468);">Record History</span>
<span class="t" id="t68" style="left:1664.03px;top:995.00px;font-size:15.5px;line-height:21px;color:#222;font-weight:bold;">I</span>
<span class="t" id="t69" style="left:1697.06px;top:151.00px;font-size:15.5px;line-height:21px;color:#77787f;transform:scaleX(0.8983);">Search</span>
<span class="t" id="t70" style="left:1680.43px;top:187.00px;font-size:15.5px;line-height:21px;color:#222;transform:scaleX(0.8857);">Layer</span>
<span class="t" id="t71" style="left:1879.09px;top:187.00px;font-size:15.5px;line-height:21px;color:#222;width:34px;overflow:hidden;">Material</span>
<span class="t" id="t72" style="left:1695.46px;top:213.00px;font-size:15.5px;line-height:21px;color:#111;font-weight:bold;transform:scaleX(0.9692);">Default</span>
<span class="t" id="t73" style="left:1695.30px;top:237.00px;font-size:15.5px;line-height:21px;color:#111;transform:scaleX(0.9046);">Layer 01</span>
<span class="t" id="t74" style="left:1695.30px;top:261.00px;font-size:15.5px;line-height:21px;color:#111;transform:scaleX(0.9046);">Layer 02</span>
<span class="t" id="t75" style="left:1695.30px;top:284.00px;font-size:15.5px;line-height:21px;color:#111;transform:scaleX(0.9046);">Layer 03</span>
<span class="t" id="t76" style="left:1695.31px;top:308.00px;font-size:15.5px;line-height:21px;color:#111;transform:scaleX(0.9008);">Layer 04</span>
<span class="t" id="t77" style="left:1695.30px;top:332.00px;font-size:15.5px;line-height:21px;color:#111;transform:scaleX(0.9046);">Layer 05</span>
<span class="t" id="t78" style="left:1694.97px;top:356.00px;font-size:15.5px;line-height:21px;color:#111;transform:scaleX(1.0036);">2d</span>
<span class="t" id="t79" style="left:1695.22px;top:380.00px;font-size:15.5px;line-height:21px;color:#111;transform:scaleX(0.9883);">3d</span>
</body></html>
